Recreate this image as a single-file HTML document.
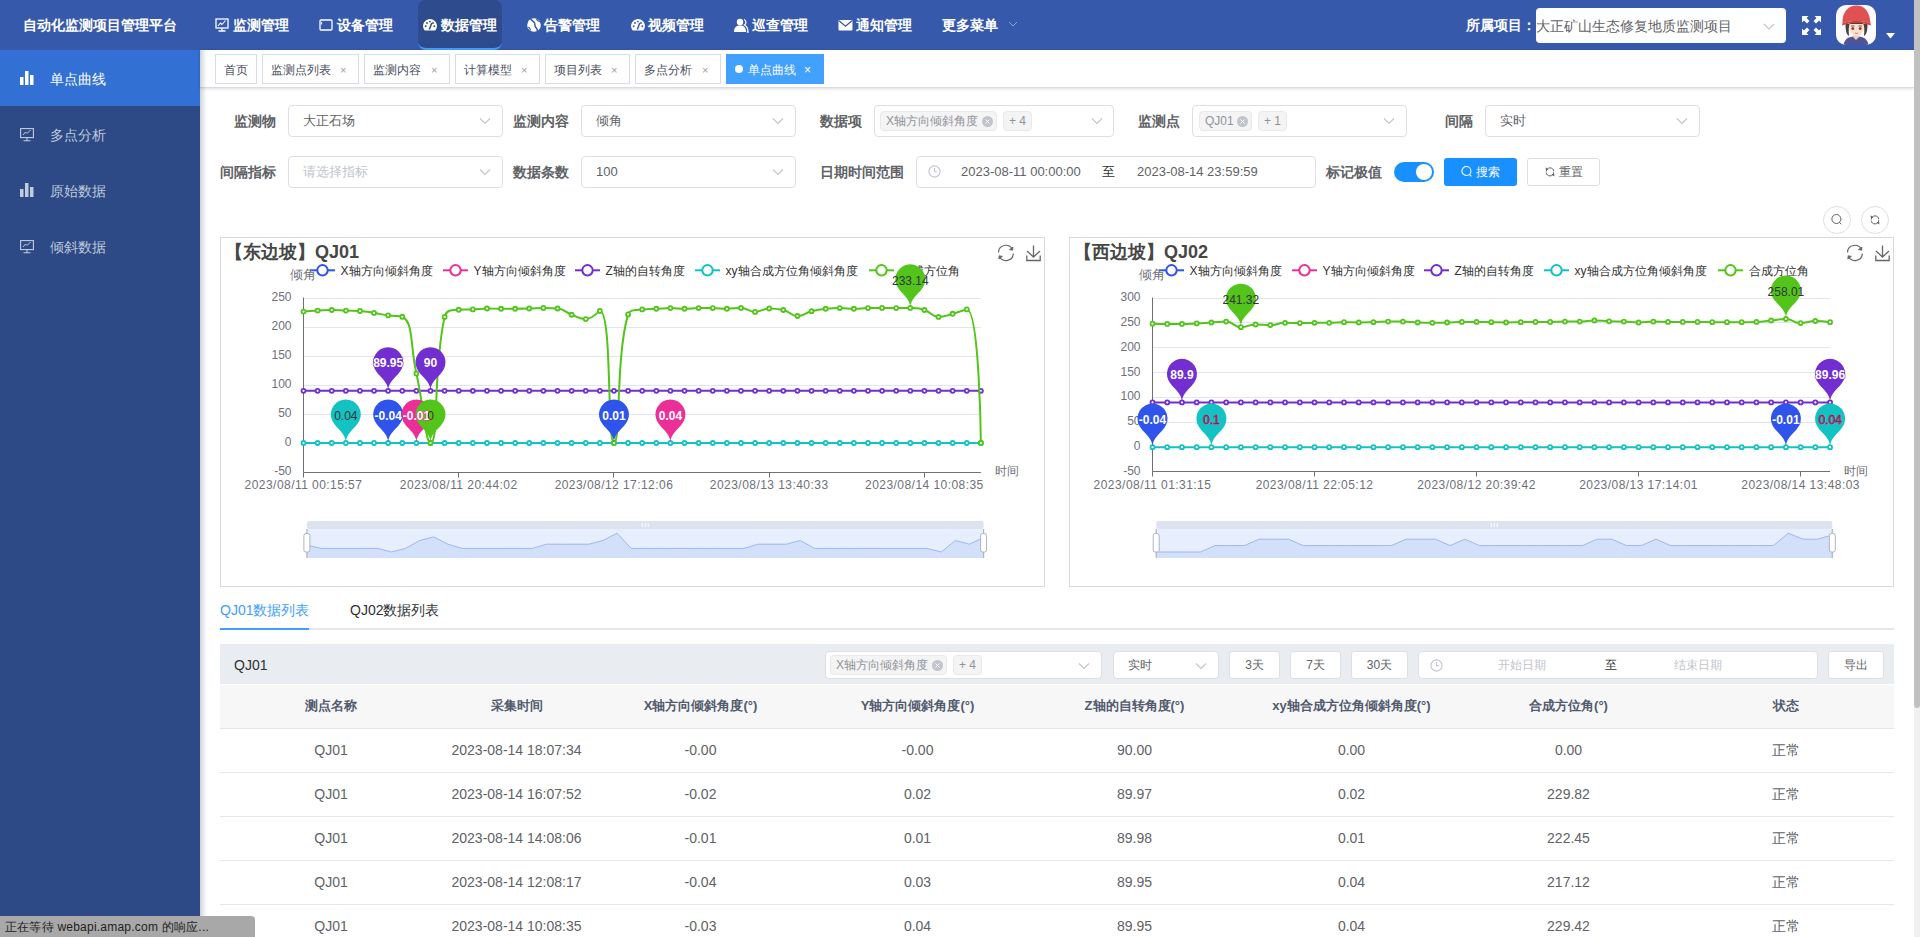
<!DOCTYPE html>
<html><head><meta charset="utf-8"><title>单点曲线</title>
<style>
*{box-sizing:border-box;margin:0;padding:0}
html,body{width:1920px;height:937px;overflow:hidden}
body{position:relative;font-family:"Liberation Sans",sans-serif;background:#fff;color:#606266}
.t{position:absolute;white-space:nowrap}
.r{position:absolute}
svg{position:absolute;overflow:visible}
</style></head><body>

<div class="r" style="left:0px;top:0px;width:1914px;height:50px;background:#3659ac"></div>
<div class="t" style="left:23px;top:15.0px;font-size:14px;line-height:20px;color:#fff;font-weight:bold;">自动化监测项目管理平台</div>
<div class="r" style="left:418px;top:0px;width:84px;height:50px;background:#2e4b8d;border-radius:8px;border-bottom:2px solid #409eff"></div>
<svg style="left:215px;top:18px" width="15" height="14" viewBox="0 0 15 14"><rect x="1" y="1" width="12" height="9" fill="none" stroke="#fff" stroke-width="1.3"/><path d="M3 8 L5.5 5 L7 6.5 L10.5 2.5" fill="none" stroke="#fff" stroke-width="1.1"/><path d="M7 10 V13 M3.5 13 H10.5" stroke="#fff" stroke-width="1.3"/></svg>
<div class="t" style="left:233px;top:15.0px;font-size:14px;line-height:20px;color:#fff;font-weight:bold;">监测管理</div>
<svg style="left:319px;top:18px" width="15" height="14" viewBox="0 0 15 14"><rect x="1" y="2" width="12" height="10" rx="1" fill="none" stroke="#fff" stroke-width="1.3"/><path d="M2.6 4 V6.5" stroke="#fff" stroke-width="1"/></svg>
<div class="t" style="left:337px;top:15.0px;font-size:14px;line-height:20px;color:#fff;font-weight:bold;">设备管理</div>
<svg style="left:423px;top:18px" width="15" height="14" viewBox="0 0 15 14"><path d="M1.64 12.5 A7 7 0 1 1 12.36 12.5 Z" fill="#fff"/><circle cx="2.7" cy="8.3" r="0.95" fill="#2e4b8d"/><circle cx="4" cy="5" r="0.95" fill="#2e4b8d"/><circle cx="7" cy="3.6" r="0.95" fill="#2e4b8d"/><circle cx="11.3" cy="8.3" r="0.95" fill="#2e4b8d"/><circle cx="10" cy="5" r="0.95" fill="#2e4b8d"/><path d="M6.3 11.5 L8.8 5" stroke="#2e4b8d" stroke-width="1.5"/></svg>
<div class="t" style="left:441px;top:15.0px;font-size:14px;line-height:20px;color:#fff;font-weight:bold;">数据管理</div>
<svg style="left:527px;top:18px" width="15" height="14" viewBox="0 0 15 14"><circle cx="7" cy="7" r="6.8" fill="#fff"/><path d="M3.8 0.9 C4.6 2.6 6.4 3.2 7.4 4.6 C8.4 6.2 7.2 8 8.8 9.4 C9.9 10.4 10.6 11.6 10.2 13.4" fill="none" stroke="#3659ac" stroke-width="1.5"/><path d="M9.4 0.9 C9.8 2.4 11.4 3.2 13.4 3.8" fill="none" stroke="#3659ac" stroke-width="1.2"/><path d="M1.2 9.2 C2.6 9.4 3.2 10.6 3.4 12.4" fill="none" stroke="#3659ac" stroke-width="1.1"/></svg>
<div class="t" style="left:544px;top:15.0px;font-size:14px;line-height:20px;color:#fff;font-weight:bold;">告警管理</div>
<svg style="left:631px;top:18px" width="15" height="14" viewBox="0 0 15 14"><path d="M1.64 12.5 A7 7 0 1 1 12.36 12.5 Z" fill="#fff"/><circle cx="2.7" cy="8.3" r="0.95" fill="#3659ac"/><circle cx="4" cy="5" r="0.95" fill="#3659ac"/><circle cx="7" cy="3.6" r="0.95" fill="#3659ac"/><circle cx="11.3" cy="8.3" r="0.95" fill="#3659ac"/><circle cx="10" cy="5" r="0.95" fill="#3659ac"/><path d="M6.3 11.5 L8.8 5" stroke="#3659ac" stroke-width="1.5"/></svg>
<div class="t" style="left:648px;top:15.0px;font-size:14px;line-height:20px;color:#fff;font-weight:bold;">视频管理</div>
<svg style="left:734px;top:18px" width="15" height="14" viewBox="0 0 15 14"><circle cx="6" cy="4" r="3.2" fill="#fff"/><path d="M0 14 C0 9 2.5 7.5 6 7.5 C9.5 7.5 12 9 12 14 Z" fill="#fff"/><path d="M10 1.5 C12.5 2.5 12.5 6 10.5 7 C12.5 8 14 10 14 14 L12.8 14" fill="none" stroke="#fff" stroke-width="1.3"/></svg>
<div class="t" style="left:752px;top:15.0px;font-size:14px;line-height:20px;color:#fff;font-weight:bold;">巡查管理</div>
<svg style="left:838px;top:18px" width="15" height="14" viewBox="0 0 15 14"><rect x="0.5" y="2" width="14" height="10.5" rx="1" fill="#fff"/><path d="M1 2.8 L7.5 8.2 L14 2.8" fill="none" stroke="#3659ac" stroke-width="1.3"/></svg>
<div class="t" style="left:856px;top:15.0px;font-size:14px;line-height:20px;color:#fff;font-weight:bold;">通知管理</div>
<div class="t" style="left:942px;top:15.0px;font-size:14px;line-height:20px;color:#fff;font-weight:bold;">更多菜单</div>
<svg style="left:1008px;top:21px" width="10" height="7" viewBox="0 0 10 7"><path d="M1 1 L5 5 L9 1" fill="none" stroke="#8fa6d6" stroke-width="1"/></svg>
<div class="t" style="left:1466px;top:15.0px;font-size:14px;line-height:20px;color:#fff;font-weight:bold;">所属项目：</div>
<div class="r" style="left:1536px;top:8px;width:250px;height:35px;background:#fff;border-radius:4px"></div>
<div class="t" style="left:1536px;top:15.5px;font-size:14px;line-height:20px;color:#606266;font-weight:normal;">大正矿山生态修复地质监测项目</div>
<svg style="left:1763px;top:23px" width="12" height="8" viewBox="0 0 12 8"><path d="M1 1 L6 6 L11 1" fill="none" stroke="#c0c4cc" stroke-width="1.2"/></svg>
<svg style="left:1802px;top:16px" width="19" height="19" viewBox="0 0 19 19"><g fill="#fff"><path d="M0 0 H6.5 L4.5 2 L7.5 5 L5 7.5 L2 4.5 L0 6.5 Z"/><path d="M19 0 V6.5 L17 4.5 L14 7.5 L11.5 5 L14.5 2 L12.5 0 Z"/><path d="M0 19 V12.5 L2 14.5 L5 11.5 L7.5 14 L4.5 17 L6.5 19 Z"/><path d="M19 19 H12.5 L14.5 17 L11.5 14 L14 11.5 L17 14.5 L19 12.5 Z"/></g></svg>
<svg style="left:1836px;top:5px" width="40" height="40" viewBox="0 0 40 40">
<defs><clipPath id="avc"><rect x="0" y="0" width="40" height="40" rx="10"/></clipPath></defs>
<g clip-path="url(#avc)">
<rect width="40" height="40" fill="#fdfbfd"/>
<path d="M7.5 40 C8.5 34 12 31.5 20 31.5 C28 31.5 31.5 34 32.5 40 Z" fill="#4f5496"/>
<path d="M17 27 H23 V32 L20 35 L17 32 Z" fill="#f2cdb6"/>
<path d="M12.5 17 C12.5 25 15 31 20.5 31 C26 31 28.5 25 28.5 17 Z" fill="#f7e0d0"/>
<path d="M9.5 19 C9.5 27 11 30 13 31 C12.5 26 12.5 21 14 18 L27 18 C28.5 21 28.5 26 28 31 C30 30 31.5 27 31.5 19 Z" fill="#4a3f3a"/>
<path d="M6.5 18.5 C6 8 11.5 0.5 20.5 0.5 C29.5 0.5 34 8 34.5 18.5 C30 16.5 25 16 20.5 16 C16 16 11 16.5 6.5 18.5 Z" fill="#e05252"/>
<path d="M6.5 18.5 C11 16.5 16 16 20.5 16 C25 16 30 16.5 34.5 18.5 L35 20.5 C30 18.5 25 18 20.5 18 C16 18 11 18.5 6 20.5 Z" fill="#c94040"/>
<ellipse cx="16.8" cy="23.5" rx="1.4" ry="1.6" fill="#9b3a2a"/><ellipse cx="24.2" cy="23.5" rx="1.4" ry="1.6" fill="#9b3a2a"/>
<path d="M15 21 H18.5 M22.5 21 H26" stroke="#4a3f3a" stroke-width="0.8"/>
<path d="M19 28 Q20.5 29 22 28" stroke="#e0705f" stroke-width="1" fill="none"/>
</g></svg>
<svg style="left:1886px;top:33px" width="9" height="6" viewBox="0 0 9 6"><path d="M0 0 H9 L4.5 5.5 Z" fill="#fff"/></svg>
<div class="r" style="left:0px;top:50px;width:200px;height:887px;background:#2d4986"></div>
<div class="r" style="left:0px;top:50px;width:200px;height:56px;background:#3270d3"></div>
<svg style="left:20px;top:71px" width="14" height="14" viewBox="0 0 14 14"><rect x="0" y="6" width="3.5" height="8" fill="#fff"/><rect x="5" y="0" width="3.5" height="14" fill="#fff"/><rect x="10" y="4" width="3.5" height="10" fill="#fff"/></svg>
<div class="t" style="left:50px;top:69.0px;font-size:14px;line-height:20px;color:#fff;font-weight:normal;">单点曲线</div>
<svg style="left:20px;top:128px" width="14" height="14" viewBox="0 0 14 14"><rect x="0.6" y="0.6" width="12.8" height="9" fill="none" stroke="#c3ccd9" stroke-width="1.1"/><path d="M3 7 L5.5 4 L7 5.5 L10.5 2" fill="none" stroke="#c3ccd9" stroke-width="1"/><path d="M7 9.6 V12.5 M3.5 12.8 H10.5" stroke="#c3ccd9" stroke-width="1.1"/></svg>
<div class="t" style="left:50px;top:125.0px;font-size:14px;line-height:20px;color:#bfcbd9;font-weight:normal;">多点分析</div>
<svg style="left:20px;top:183px" width="14" height="14" viewBox="0 0 14 14"><rect x="0" y="6" width="3.5" height="8" fill="#c3ccd9"/><rect x="5" y="0" width="3.5" height="14" fill="#c3ccd9"/><rect x="10" y="4" width="3.5" height="10" fill="#c3ccd9"/></svg>
<div class="t" style="left:50px;top:181.0px;font-size:14px;line-height:20px;color:#bfcbd9;font-weight:normal;">原始数据</div>
<svg style="left:20px;top:240px" width="14" height="14" viewBox="0 0 14 14"><rect x="0.6" y="0.6" width="12.8" height="9" fill="none" stroke="#c3ccd9" stroke-width="1.1"/><path d="M3 7 L5.5 4 L7 5.5 L10.5 2" fill="none" stroke="#c3ccd9" stroke-width="1"/><path d="M7 9.6 V12.5 M3.5 12.8 H10.5" stroke="#c3ccd9" stroke-width="1.1"/></svg>
<div class="t" style="left:50px;top:237.0px;font-size:14px;line-height:20px;color:#bfcbd9;font-weight:normal;">倾斜数据</div>
<div class="r" style="left:200px;top:50px;width:1714px;height:38px;background:#fff;border-bottom:1px solid #d8dce5;box-shadow:0 1px 3px 0 rgba(0,0,0,.12),0 0 3px 0 rgba(0,0,0,.04)"></div>
<div class="r" style="left:215px;top:54px;width:42px;height:30px;background:#fff;border:1px solid #d8dce5"></div>
<div class="t" style="left:224px;top:59.5px;font-size:12px;line-height:20px;color:#495060;font-weight:normal;">首页</div>
<div class="r" style="left:262px;top:54px;width:97px;height:30px;background:#fff;border:1px solid #d8dce5"></div>
<div class="t" style="left:271px;top:59.5px;font-size:12px;line-height:20px;color:#495060;font-weight:normal;">监测点列表</div>
<div class="t" style="left:340px;top:59.5px;font-size:11px;line-height:20px;color:#9a9ea6;font-weight:normal;">×</div>
<div class="r" style="left:364px;top:54px;width:86px;height:30px;background:#fff;border:1px solid #d8dce5"></div>
<div class="t" style="left:373px;top:59.5px;font-size:12px;line-height:20px;color:#495060;font-weight:normal;">监测内容</div>
<div class="t" style="left:431px;top:59.5px;font-size:11px;line-height:20px;color:#9a9ea6;font-weight:normal;">×</div>
<div class="r" style="left:455px;top:54px;width:85px;height:30px;background:#fff;border:1px solid #d8dce5"></div>
<div class="t" style="left:464px;top:59.5px;font-size:12px;line-height:20px;color:#495060;font-weight:normal;">计算模型</div>
<div class="t" style="left:521px;top:59.5px;font-size:11px;line-height:20px;color:#9a9ea6;font-weight:normal;">×</div>
<div class="r" style="left:545px;top:54px;width:85px;height:30px;background:#fff;border:1px solid #d8dce5"></div>
<div class="t" style="left:554px;top:59.5px;font-size:12px;line-height:20px;color:#495060;font-weight:normal;">项目列表</div>
<div class="t" style="left:611px;top:59.5px;font-size:11px;line-height:20px;color:#9a9ea6;font-weight:normal;">×</div>
<div class="r" style="left:635px;top:54px;width:86px;height:30px;background:#fff;border:1px solid #d8dce5"></div>
<div class="t" style="left:644px;top:59.5px;font-size:12px;line-height:20px;color:#495060;font-weight:normal;">多点分析</div>
<div class="t" style="left:702px;top:59.5px;font-size:11px;line-height:20px;color:#9a9ea6;font-weight:normal;">×</div>
<div class="r" style="left:726px;top:54px;width:98px;height:30px;background:#42a0ff;border:1px solid #42a0ff"></div>
<div class="r" style="left:735px;top:65px;width:8px;height:8px;border-radius:50%;background:#fff"></div>
<div class="t" style="left:748px;top:59.5px;font-size:12px;line-height:20px;color:#fff;font-weight:normal;">单点曲线</div>
<div class="t" style="left:804px;top:59.5px;font-size:12px;line-height:20px;color:#fff;font-weight:normal;">×</div>
<div class="r" style="left:200px;top:50px;width:8px;height:887px;background:linear-gradient(to right,rgba(0,21,41,0.20),rgba(0,21,41,0.12) 2px,rgba(0,21,41,0.075) 4px,rgba(0,21,41,0.03) 5.5px,rgba(0,21,41,0) 8px)"></div>
<div class="t" style="left:-324px;width:600px;text-align:right;top:110.5px;font-size:14px;line-height:20px;color:#606266;font-weight:bold;">监测物</div>
<div class="r" style="left:288px;top:105px;width:215px;height:32px;border:1px solid #dcdfe6;border-radius:4px;background:#fff"></div>
<div class="t" style="left:303px;top:111.0px;font-size:13px;line-height:20px;color:#606266;font-weight:normal;">大正石场</div>
<svg style="left:479px;top:116.5px" width="12" height="8" viewBox="0 0 12 8"><path d="M1 1.5 L6 6.5 L11 1.5" fill="none" stroke="#c0c4cc" stroke-width="1.1"/></svg>
<div class="t" style="left:-31px;width:600px;text-align:right;top:110.5px;font-size:14px;line-height:20px;color:#606266;font-weight:bold;">监测内容</div>
<div class="r" style="left:581px;top:105px;width:215px;height:32px;border:1px solid #dcdfe6;border-radius:4px;background:#fff"></div>
<div class="t" style="left:596px;top:111.0px;font-size:13px;line-height:20px;color:#606266;font-weight:normal;">倾角</div>
<svg style="left:772px;top:116.5px" width="12" height="8" viewBox="0 0 12 8"><path d="M1 1.5 L6 6.5 L11 1.5" fill="none" stroke="#c0c4cc" stroke-width="1.1"/></svg>
<div class="t" style="left:262px;width:600px;text-align:right;top:110.5px;font-size:14px;line-height:20px;color:#606266;font-weight:bold;">数据项</div>
<div class="r" style="left:874px;top:105px;width:240px;height:32px;border:1px solid #dcdfe6;border-radius:4px;background:#fff"></div>
<div class="r" style="left:880px;top:111px;width:117px;height:20px;background:#f4f4f5;border:1px solid #e9e9eb;border-radius:4px"></div><div class="t" style="left:886px;top:111.0px;font-size:12px;line-height:20px;color:#909399;font-weight:normal;">X轴方向倾斜角度</div><svg style="left:982.0px;top:115.5px" width="11" height="11" viewBox="0 0 11 11"><circle cx="5.5" cy="5.5" r="5.5" fill="#c0c4cc"/><path d="M3.5 3.5 L7.5 7.5 M7.5 3.5 L3.5 7.5" stroke="#fff" stroke-width="1"/></svg>
<div class="r" style="left:1003px;top:111px;width:29px;height:20px;background:#f4f4f5;border:1px solid #e9e9eb;border-radius:4px"></div><div class="t" style="left:1009px;top:111.0px;font-size:12px;line-height:20px;color:#909399;font-weight:normal;">+ 4</div>
<svg style="left:1091px;top:116.5px" width="12" height="8" viewBox="0 0 12 8"><path d="M1 1.5 L6 6.5 L11 1.5" fill="none" stroke="#c0c4cc" stroke-width="1.1"/></svg>
<div class="t" style="left:580px;width:600px;text-align:right;top:110.5px;font-size:14px;line-height:20px;color:#606266;font-weight:bold;">监测点</div>
<div class="r" style="left:1192px;top:105px;width:215px;height:32px;border:1px solid #dcdfe6;border-radius:4px;background:#fff"></div>
<div class="r" style="left:1199px;top:111px;width:53px;height:20px;background:#f4f4f5;border:1px solid #e9e9eb;border-radius:4px"></div><div class="t" style="left:1205px;top:111.0px;font-size:12px;line-height:20px;color:#909399;font-weight:normal;">QJ01</div><svg style="left:1237.0px;top:115.5px" width="11" height="11" viewBox="0 0 11 11"><circle cx="5.5" cy="5.5" r="5.5" fill="#c0c4cc"/><path d="M3.5 3.5 L7.5 7.5 M7.5 3.5 L3.5 7.5" stroke="#fff" stroke-width="1"/></svg>
<div class="r" style="left:1258px;top:111px;width:29px;height:20px;background:#f4f4f5;border:1px solid #e9e9eb;border-radius:4px"></div><div class="t" style="left:1264px;top:111.0px;font-size:12px;line-height:20px;color:#909399;font-weight:normal;">+ 1</div>
<svg style="left:1383px;top:116.5px" width="12" height="8" viewBox="0 0 12 8"><path d="M1 1.5 L6 6.5 L11 1.5" fill="none" stroke="#c0c4cc" stroke-width="1.1"/></svg>
<div class="t" style="left:873px;width:600px;text-align:right;top:110.5px;font-size:14px;line-height:20px;color:#606266;font-weight:bold;">间隔</div>
<div class="r" style="left:1485px;top:105px;width:215px;height:32px;border:1px solid #dcdfe6;border-radius:4px;background:#fff"></div>
<div class="t" style="left:1500px;top:111.0px;font-size:13px;line-height:20px;color:#606266;font-weight:normal;">实时</div>
<svg style="left:1676px;top:116.5px" width="12" height="8" viewBox="0 0 12 8"><path d="M1 1.5 L6 6.5 L11 1.5" fill="none" stroke="#c0c4cc" stroke-width="1.1"/></svg>
<div class="t" style="left:-324px;width:600px;text-align:right;top:161.5px;font-size:14px;line-height:20px;color:#606266;font-weight:bold;">间隔指标</div>
<div class="r" style="left:288px;top:156px;width:215px;height:32px;border:1px solid #dcdfe6;border-radius:4px;background:#fff"></div>
<div class="t" style="left:303px;top:162.0px;font-size:13px;line-height:20px;color:#c0c4cc;font-weight:normal;">请选择指标</div>
<svg style="left:479px;top:167.5px" width="12" height="8" viewBox="0 0 12 8"><path d="M1 1.5 L6 6.5 L11 1.5" fill="none" stroke="#c0c4cc" stroke-width="1.1"/></svg>
<div class="t" style="left:-31px;width:600px;text-align:right;top:161.5px;font-size:14px;line-height:20px;color:#606266;font-weight:bold;">数据条数</div>
<div class="r" style="left:581px;top:156px;width:215px;height:32px;border:1px solid #dcdfe6;border-radius:4px;background:#fff"></div>
<div class="t" style="left:596px;top:162.0px;font-size:13px;line-height:20px;color:#606266;font-weight:normal;">100</div>
<svg style="left:772px;top:167.5px" width="12" height="8" viewBox="0 0 12 8"><path d="M1 1.5 L6 6.5 L11 1.5" fill="none" stroke="#c0c4cc" stroke-width="1.1"/></svg>
<div class="t" style="left:304px;width:600px;text-align:right;top:161.5px;font-size:14px;line-height:20px;color:#606266;font-weight:bold;">日期时间范围</div>
<div class="r" style="left:916px;top:156px;width:400px;height:32px;border:1px solid #dcdfe6;border-radius:4px;background:#fff"></div>
<svg style="left:928px;top:165.0px" width="13" height="13" viewBox="0 0 13 13"><circle cx="6.5" cy="6.5" r="5.6" fill="none" stroke="#c0c4cc" stroke-width="1.1"/><path d="M6.5 3 V6.8 H9.2" fill="none" stroke="#c0c4cc" stroke-width="1.1"/></svg>
<div class="t" style="left:961px;top:162.0px;font-size:13px;line-height:20px;color:#606266;font-weight:normal;">2023-08-11 00:00:00</div>
<div class="t" style="left:1102px;top:161.5px;font-size:13px;line-height:20px;color:#303133;font-weight:normal;">至</div>
<div class="t" style="left:1137px;top:162.0px;font-size:13px;line-height:20px;color:#606266;font-weight:normal;">2023-08-14 23:59:59</div>
<div class="t" style="left:782px;width:600px;text-align:right;top:161.5px;font-size:14px;line-height:20px;color:#606266;font-weight:bold;">标记极值</div>
<div class="r" style="left:1394px;top:162px;width:40px;height:20px;background:#1890ff;border-radius:10px"></div>
<div class="r" style="left:1416px;top:164px;width:16px;height:16px;background:#fff;border-radius:50%"></div>
<div class="r" style="left:1444px;top:158px;width:73px;height:28px;background:#1890ff;border-radius:3px"></div>
<svg style="left:1461px;top:166px" width="12" height="12" viewBox="0 0 12 12"><circle cx="5.4" cy="5" r="4.5" fill="none" stroke="#fff" stroke-width="1.1"/><path d="M8.4 8.4 L10.3 10.3" stroke="#fff" stroke-width="1.1"/></svg>
<div class="t" style="left:1476px;top:162.0px;font-size:12px;line-height:20px;color:#fff;font-weight:normal;">搜索</div>
<div class="r" style="left:1527px;top:158px;width:73px;height:28px;background:#fff;border:1px solid #dcdfe6;border-radius:3px"></div>
<svg style="left:1545px;top:167px" width="10" height="10" viewBox="0 0 10 10"><path d="M1.3 4.6 C1.3 2.3 2.8 0.9 5 0.9 C7.2 0.9 8.7 2.3 8.7 4.3 M8.7 5.2 C8.7 7.4 7.2 8.9 5 8.9 C2.8 8.9 1.3 7.5 1.1 5.6" fill="none" stroke="#606266" stroke-width="1"/><path d="M0.6 0.3 L3.6 2.4 L0.9 3.2 Z M9.4 9.5 L6.4 7.4 L9.1 6.6 Z" fill="#606266"/></svg>
<div class="t" style="left:1559px;top:162.0px;font-size:12px;line-height:20px;color:#606266;font-weight:normal;">重置</div>
<div class="r" style="left:1823px;top:206px;width:28px;height:28px;border:1px solid #dcdfe6;border-radius:50%;background:#fff"></div>
<svg style="left:1831px;top:214px" width="12" height="12" viewBox="0 0 12 12"><circle cx="5.4" cy="5" r="4.5" fill="none" stroke="#606266" stroke-width="1"/><path d="M8.4 8.4 L10.3 10.3" stroke="#606266" stroke-width="1"/></svg>
<div class="r" style="left:1861px;top:206px;width:28px;height:28px;border:1px solid #dcdfe6;border-radius:50%;background:#fff"></div>
<svg style="left:1870px;top:215px" width="10" height="10" viewBox="0 0 10 10"><path d="M1.3 4.6 C1.3 2.3 2.8 0.9 5 0.9 C7.2 0.9 8.7 2.3 8.7 4.3 M8.7 5.2 C8.7 7.4 7.2 8.9 5 8.9 C2.8 8.9 1.3 7.5 1.1 5.6" fill="none" stroke="#606266" stroke-width="1"/><path d="M0.6 0.3 L3.6 2.4 L0.9 3.2 Z M9.4 9.5 L6.4 7.4 L9.1 6.6 Z" fill="#606266"/></svg>
<div class="r" style="left:220px;top:237px;width:825px;height:350px;border:1px solid #d9d9d9"></div>
<div class="t" style="left:225px;top:239.5px;font-size:18px;line-height:24px;color:#464646;font-weight:bold;">【东边坡】QJ01</div>
<svg style="left:997px;top:244px" width="18" height="18" viewBox="0 0 18 18"><path d="M1.5 8.5 A7.3 7.3 0 0 1 15.3 5.3 M16.3 9.5 A7.3 7.3 0 0 1 2.5 12.6" fill="none" stroke="#666" stroke-width="1.2"/><path d="M16 3 L15.6 6.3 L12.4 5.6 Z M1.8 15 L2.2 11.7 L5.4 12.4 Z" fill="#666" stroke="#666" stroke-width="0.8"/></svg>
<svg style="left:1026px;top:245px" width="15" height="17" viewBox="0 0 15 17"><path d="M7.5 0.5 V11.5 M1 6 L7.5 12 L14 6 M0.8 10.5 V15.5 H14.2 V10.5" fill="none" stroke="#666" stroke-width="1.3"/></svg>
<svg style="left:310px;top:263px" width="25" height="14" viewBox="0 0 25 14"><path d="M0 7.3 H25" stroke="#2f54eb" stroke-width="2"/><circle cx="12.5" cy="7.3" r="5.2" fill="#fff" stroke="#2f54eb" stroke-width="2"/></svg>
<div class="t" style="left:340.5px;top:260.5px;font-size:12px;line-height:20px;color:#333;font-weight:normal;">X轴方向倾斜角度</div>
<svg style="left:443px;top:263px" width="25" height="14" viewBox="0 0 25 14"><path d="M0 7.3 H25" stroke="#eb2f96" stroke-width="2"/><circle cx="12.5" cy="7.3" r="5.2" fill="#fff" stroke="#eb2f96" stroke-width="2"/></svg>
<div class="t" style="left:473.5px;top:260.5px;font-size:12px;line-height:20px;color:#333;font-weight:normal;">Y轴方向倾斜角度</div>
<svg style="left:575px;top:263px" width="25" height="14" viewBox="0 0 25 14"><path d="M0 7.3 H25" stroke="#722ed1" stroke-width="2"/><circle cx="12.5" cy="7.3" r="5.2" fill="#fff" stroke="#722ed1" stroke-width="2"/></svg>
<div class="t" style="left:605.5px;top:260.5px;font-size:12px;line-height:20px;color:#333;font-weight:normal;">Z轴的自转角度</div>
<svg style="left:695px;top:263px" width="25" height="14" viewBox="0 0 25 14"><path d="M0 7.3 H25" stroke="#13c2c2" stroke-width="2"/><circle cx="12.5" cy="7.3" r="5.2" fill="#fff" stroke="#13c2c2" stroke-width="2"/></svg>
<div class="t" style="left:725.5px;top:260.5px;font-size:12px;line-height:20px;color:#333;font-weight:normal;">xy轴合成方位角倾斜角度</div>
<svg style="left:869px;top:263px" width="25" height="14" viewBox="0 0 25 14"><path d="M0 7.3 H25" stroke="#52c41a" stroke-width="2"/><circle cx="12.5" cy="7.3" r="5.2" fill="#fff" stroke="#52c41a" stroke-width="2"/></svg>
<div class="t" style="left:899.5px;top:260.5px;font-size:12px;line-height:20px;color:#333;font-weight:normal;">合成方位角</div>
<div class="t" style="left:-284px;width:600px;text-align:right;top:264.5px;font-size:13px;line-height:20px;color:#6e7079;font-weight:normal;">倾角</div>
<svg style="left:0;top:0" width="1920" height="937">
<path d="M303.5 298.50 H980.88" stroke="#e0e6f1" stroke-width="1"/>
<path d="M303.5 327.50 H980.88" stroke="#e0e6f1" stroke-width="1"/>
<path d="M303.5 356.50 H980.88" stroke="#e0e6f1" stroke-width="1"/>
<path d="M303.5 385.50 H980.88" stroke="#e0e6f1" stroke-width="1"/>
<path d="M303.5 414.50 H980.88" stroke="#e0e6f1" stroke-width="1"/>
<path d="M303.5 443.50 H980.88" stroke="#e0e6f1" stroke-width="1"/>
<path d="M303.50 297.50 V472.50" stroke="#6e7079" stroke-width="1"/>
<path d="M303.50 472.50 H980.88" stroke="#6e7079" stroke-width="1"/>
<path d="M303.50 472.50 V477.50" stroke="#6e7079" stroke-width="1"/>
<path d="M458.50 472.50 V477.50" stroke="#6e7079" stroke-width="1"/>
<path d="M613.50 472.50 V477.50" stroke="#6e7079" stroke-width="1"/>
<path d="M769.50 472.50 V477.50" stroke="#6e7079" stroke-width="1"/>
<path d="M924.50 472.50 V477.50" stroke="#6e7079" stroke-width="1"/>
</svg>
<div class="t" style="left:-308.5px;width:600px;text-align:right;top:287.0px;font-size:12px;line-height:20px;color:#6e7079;font-weight:normal;">250</div>
<div class="t" style="left:-308.5px;width:600px;text-align:right;top:316.0px;font-size:12px;line-height:20px;color:#6e7079;font-weight:normal;">200</div>
<div class="t" style="left:-308.5px;width:600px;text-align:right;top:345.0px;font-size:12px;line-height:20px;color:#6e7079;font-weight:normal;">150</div>
<div class="t" style="left:-308.5px;width:600px;text-align:right;top:374.0px;font-size:12px;line-height:20px;color:#6e7079;font-weight:normal;">100</div>
<div class="t" style="left:-308.5px;width:600px;text-align:right;top:403.0px;font-size:12px;line-height:20px;color:#6e7079;font-weight:normal;">50</div>
<div class="t" style="left:-308.5px;width:600px;text-align:right;top:432.0px;font-size:12px;line-height:20px;color:#6e7079;font-weight:normal;">0</div>
<div class="t" style="left:-308.5px;width:600px;text-align:right;top:461.0px;font-size:12px;line-height:20px;color:#6e7079;font-weight:normal;">-50</div>
<div class="t" style="left:3.5px;width:600px;text-align:center;top:474.5px;font-size:12px;line-height:20px;color:#6e7079;font-weight:normal;letter-spacing:0.45px">2023/08/11 00:15:57</div>
<div class="t" style="left:158.73199999999997px;width:600px;text-align:center;top:474.5px;font-size:12px;line-height:20px;color:#6e7079;font-weight:normal;letter-spacing:0.45px">2023/08/11 20:44:02</div>
<div class="t" style="left:313.96399999999994px;width:600px;text-align:center;top:474.5px;font-size:12px;line-height:20px;color:#6e7079;font-weight:normal;letter-spacing:0.45px">2023/08/12 17:12:06</div>
<div class="t" style="left:469.196px;width:600px;text-align:center;top:474.5px;font-size:12px;line-height:20px;color:#6e7079;font-weight:normal;letter-spacing:0.45px">2023/08/13 13:40:33</div>
<div class="t" style="left:624.428px;width:600px;text-align:center;top:474.5px;font-size:12px;line-height:20px;color:#6e7079;font-weight:normal;letter-spacing:0.45px">2023/08/14 10:08:35</div>
<div class="t" style="left:994.876px;top:460.5px;font-size:12px;line-height:20px;color:#6e7079;font-weight:normal;">时间</div>
<svg style="left:0;top:0" width="1920" height="937">
<path d="M303.50 390.80 C303.50 390.80 310.56 390.80 317.61 390.80 C324.67 390.80 324.67 390.80 331.72 390.80 C338.78 390.80 338.78 390.80 345.84 390.80 C352.89 390.80 352.89 390.80 359.95 390.80 C367.00 390.80 367.00 390.80 374.06 390.80 C381.12 390.80 381.12 390.80 388.17 390.80 C395.23 390.80 395.23 390.80 402.28 390.80 C409.34 390.80 409.34 390.80 416.40 390.80 C423.45 390.80 423.45 390.80 430.51 390.80 C437.56 390.80 437.56 390.80 444.62 390.80 C451.68 390.80 451.68 390.80 458.73 390.80 C465.79 390.80 465.79 390.80 472.84 390.80 C479.90 390.80 479.90 390.80 486.96 390.80 C494.01 390.80 494.01 390.80 501.07 390.80 C508.12 390.80 508.12 390.80 515.18 390.80 C522.24 390.80 522.24 390.80 529.29 390.80 C536.35 390.80 536.35 390.80 543.40 390.80 C550.46 390.80 550.46 390.80 557.52 390.80 C564.57 390.80 564.57 390.80 571.63 390.80 C578.68 390.80 578.68 390.80 585.74 390.80 C592.80 390.80 592.80 390.80 599.85 390.80 C606.91 390.80 606.91 390.80 613.96 390.80 C621.02 390.80 621.02 390.80 628.08 390.80 C635.13 390.80 635.13 390.80 642.19 390.80 C649.24 390.80 649.24 390.80 656.30 390.80 C663.36 390.80 663.36 390.80 670.41 390.80 C677.47 390.80 677.47 390.80 684.52 390.80 C691.58 390.80 691.58 390.80 698.64 390.80 C705.69 390.80 705.69 390.80 712.75 390.80 C719.80 390.80 719.80 390.80 726.86 390.80 C733.92 390.80 733.92 390.80 740.97 390.80 C748.03 390.80 748.03 390.80 755.08 390.80 C762.14 390.80 762.14 390.80 769.20 390.80 C776.25 390.80 776.25 390.80 783.31 390.80 C790.36 390.80 790.36 390.80 797.42 390.80 C804.48 390.80 804.48 390.80 811.53 390.80 C818.59 390.80 818.59 390.80 825.64 390.80 C832.70 390.80 832.70 390.80 839.76 390.80 C846.81 390.80 846.81 390.80 853.87 390.80 C860.92 390.80 860.92 390.80 867.98 390.80 C875.04 390.80 875.04 390.80 882.09 390.80 C889.15 390.80 889.15 390.80 896.20 390.80 C903.26 390.80 903.26 390.80 910.32 390.80 C917.37 390.80 917.37 390.80 924.43 390.80 C931.48 390.80 931.48 390.80 938.54 390.80 C945.60 390.80 945.60 390.80 952.65 390.80 C959.71 390.80 959.71 390.80 966.76 390.80 C973.82 390.80 980.88 390.80 980.88 390.80" fill="none" stroke="#722ed1" stroke-width="2" stroke-linejoin="round"/><circle cx="303.50" cy="390.80" r="2" fill="#fff" stroke="#722ed1" stroke-width="1.8"/><circle cx="317.61" cy="390.80" r="2" fill="#fff" stroke="#722ed1" stroke-width="1.8"/><circle cx="331.72" cy="390.80" r="2" fill="#fff" stroke="#722ed1" stroke-width="1.8"/><circle cx="345.84" cy="390.80" r="2" fill="#fff" stroke="#722ed1" stroke-width="1.8"/><circle cx="359.95" cy="390.80" r="2" fill="#fff" stroke="#722ed1" stroke-width="1.8"/><circle cx="374.06" cy="390.80" r="2" fill="#fff" stroke="#722ed1" stroke-width="1.8"/><circle cx="388.17" cy="390.80" r="2" fill="#fff" stroke="#722ed1" stroke-width="1.8"/><circle cx="402.28" cy="390.80" r="2" fill="#fff" stroke="#722ed1" stroke-width="1.8"/><circle cx="416.40" cy="390.80" r="2" fill="#fff" stroke="#722ed1" stroke-width="1.8"/><circle cx="430.51" cy="390.80" r="2" fill="#fff" stroke="#722ed1" stroke-width="1.8"/><circle cx="444.62" cy="390.80" r="2" fill="#fff" stroke="#722ed1" stroke-width="1.8"/><circle cx="458.73" cy="390.80" r="2" fill="#fff" stroke="#722ed1" stroke-width="1.8"/><circle cx="472.84" cy="390.80" r="2" fill="#fff" stroke="#722ed1" stroke-width="1.8"/><circle cx="486.96" cy="390.80" r="2" fill="#fff" stroke="#722ed1" stroke-width="1.8"/><circle cx="501.07" cy="390.80" r="2" fill="#fff" stroke="#722ed1" stroke-width="1.8"/><circle cx="515.18" cy="390.80" r="2" fill="#fff" stroke="#722ed1" stroke-width="1.8"/><circle cx="529.29" cy="390.80" r="2" fill="#fff" stroke="#722ed1" stroke-width="1.8"/><circle cx="543.40" cy="390.80" r="2" fill="#fff" stroke="#722ed1" stroke-width="1.8"/><circle cx="557.52" cy="390.80" r="2" fill="#fff" stroke="#722ed1" stroke-width="1.8"/><circle cx="571.63" cy="390.80" r="2" fill="#fff" stroke="#722ed1" stroke-width="1.8"/><circle cx="585.74" cy="390.80" r="2" fill="#fff" stroke="#722ed1" stroke-width="1.8"/><circle cx="599.85" cy="390.80" r="2" fill="#fff" stroke="#722ed1" stroke-width="1.8"/><circle cx="613.96" cy="390.80" r="2" fill="#fff" stroke="#722ed1" stroke-width="1.8"/><circle cx="628.08" cy="390.80" r="2" fill="#fff" stroke="#722ed1" stroke-width="1.8"/><circle cx="642.19" cy="390.80" r="2" fill="#fff" stroke="#722ed1" stroke-width="1.8"/><circle cx="656.30" cy="390.80" r="2" fill="#fff" stroke="#722ed1" stroke-width="1.8"/><circle cx="670.41" cy="390.80" r="2" fill="#fff" stroke="#722ed1" stroke-width="1.8"/><circle cx="684.52" cy="390.80" r="2" fill="#fff" stroke="#722ed1" stroke-width="1.8"/><circle cx="698.64" cy="390.80" r="2" fill="#fff" stroke="#722ed1" stroke-width="1.8"/><circle cx="712.75" cy="390.80" r="2" fill="#fff" stroke="#722ed1" stroke-width="1.8"/><circle cx="726.86" cy="390.80" r="2" fill="#fff" stroke="#722ed1" stroke-width="1.8"/><circle cx="740.97" cy="390.80" r="2" fill="#fff" stroke="#722ed1" stroke-width="1.8"/><circle cx="755.08" cy="390.80" r="2" fill="#fff" stroke="#722ed1" stroke-width="1.8"/><circle cx="769.20" cy="390.80" r="2" fill="#fff" stroke="#722ed1" stroke-width="1.8"/><circle cx="783.31" cy="390.80" r="2" fill="#fff" stroke="#722ed1" stroke-width="1.8"/><circle cx="797.42" cy="390.80" r="2" fill="#fff" stroke="#722ed1" stroke-width="1.8"/><circle cx="811.53" cy="390.80" r="2" fill="#fff" stroke="#722ed1" stroke-width="1.8"/><circle cx="825.64" cy="390.80" r="2" fill="#fff" stroke="#722ed1" stroke-width="1.8"/><circle cx="839.76" cy="390.80" r="2" fill="#fff" stroke="#722ed1" stroke-width="1.8"/><circle cx="853.87" cy="390.80" r="2" fill="#fff" stroke="#722ed1" stroke-width="1.8"/><circle cx="867.98" cy="390.80" r="2" fill="#fff" stroke="#722ed1" stroke-width="1.8"/><circle cx="882.09" cy="390.80" r="2" fill="#fff" stroke="#722ed1" stroke-width="1.8"/><circle cx="896.20" cy="390.80" r="2" fill="#fff" stroke="#722ed1" stroke-width="1.8"/><circle cx="910.32" cy="390.80" r="2" fill="#fff" stroke="#722ed1" stroke-width="1.8"/><circle cx="924.43" cy="390.80" r="2" fill="#fff" stroke="#722ed1" stroke-width="1.8"/><circle cx="938.54" cy="390.80" r="2" fill="#fff" stroke="#722ed1" stroke-width="1.8"/><circle cx="952.65" cy="390.80" r="2" fill="#fff" stroke="#722ed1" stroke-width="1.8"/><circle cx="966.76" cy="390.80" r="2" fill="#fff" stroke="#722ed1" stroke-width="1.8"/><circle cx="980.88" cy="390.80" r="2" fill="#fff" stroke="#722ed1" stroke-width="1.8"/>
<path d="M303.50 443.00 C303.50 443.00 310.56 443.00 317.61 443.00 C324.67 443.00 324.67 443.00 331.72 443.00 C338.78 443.00 338.78 443.00 345.84 443.00 C352.89 443.00 352.89 443.00 359.95 443.00 C367.00 443.00 367.00 443.00 374.06 443.00 C381.12 443.00 381.12 443.00 388.17 443.00 C395.23 443.00 395.23 443.00 402.28 443.00 C409.34 443.00 409.34 443.00 416.40 443.00 C423.45 443.00 423.45 443.00 430.51 443.00 C437.56 443.00 437.56 443.00 444.62 443.00 C451.68 443.00 451.68 443.00 458.73 443.00 C465.79 443.00 465.79 443.00 472.84 443.00 C479.90 443.00 479.90 443.00 486.96 443.00 C494.01 443.00 494.01 443.00 501.07 443.00 C508.12 443.00 508.12 443.00 515.18 443.00 C522.24 443.00 522.24 443.00 529.29 443.00 C536.35 443.00 536.35 443.00 543.40 443.00 C550.46 443.00 550.46 443.00 557.52 443.00 C564.57 443.00 564.57 443.00 571.63 443.00 C578.68 443.00 578.68 443.00 585.74 443.00 C592.80 443.00 592.80 443.00 599.85 443.00 C606.91 443.00 606.91 443.00 613.96 443.00 C621.02 443.00 621.02 443.00 628.08 443.00 C635.13 443.00 635.13 443.00 642.19 443.00 C649.24 443.00 649.24 443.00 656.30 443.00 C663.36 443.00 663.36 443.00 670.41 443.00 C677.47 443.00 677.47 443.00 684.52 443.00 C691.58 443.00 691.58 443.00 698.64 443.00 C705.69 443.00 705.69 443.00 712.75 443.00 C719.80 443.00 719.80 443.00 726.86 443.00 C733.92 443.00 733.92 443.00 740.97 443.00 C748.03 443.00 748.03 443.00 755.08 443.00 C762.14 443.00 762.14 443.00 769.20 443.00 C776.25 443.00 776.25 443.00 783.31 443.00 C790.36 443.00 790.36 443.00 797.42 443.00 C804.48 443.00 804.48 443.00 811.53 443.00 C818.59 443.00 818.59 443.00 825.64 443.00 C832.70 443.00 832.70 443.00 839.76 443.00 C846.81 443.00 846.81 443.00 853.87 443.00 C860.92 443.00 860.92 443.00 867.98 443.00 C875.04 443.00 875.04 443.00 882.09 443.00 C889.15 443.00 889.15 443.00 896.20 443.00 C903.26 443.00 903.26 443.00 910.32 443.00 C917.37 443.00 917.37 443.00 924.43 443.00 C931.48 443.00 931.48 443.00 938.54 443.00 C945.60 443.00 945.60 443.00 952.65 443.00 C959.71 443.00 959.71 443.00 966.76 443.00 C973.82 443.00 980.88 443.00 980.88 443.00" fill="none" stroke="#13c2c2" stroke-width="2" stroke-linejoin="round"/><circle cx="303.50" cy="443.00" r="2" fill="#fff" stroke="#13c2c2" stroke-width="1.8"/><circle cx="317.61" cy="443.00" r="2" fill="#fff" stroke="#13c2c2" stroke-width="1.8"/><circle cx="331.72" cy="443.00" r="2" fill="#fff" stroke="#13c2c2" stroke-width="1.8"/><circle cx="345.84" cy="443.00" r="2" fill="#fff" stroke="#13c2c2" stroke-width="1.8"/><circle cx="359.95" cy="443.00" r="2" fill="#fff" stroke="#13c2c2" stroke-width="1.8"/><circle cx="374.06" cy="443.00" r="2" fill="#fff" stroke="#13c2c2" stroke-width="1.8"/><circle cx="388.17" cy="443.00" r="2" fill="#fff" stroke="#13c2c2" stroke-width="1.8"/><circle cx="402.28" cy="443.00" r="2" fill="#fff" stroke="#13c2c2" stroke-width="1.8"/><circle cx="416.40" cy="443.00" r="2" fill="#fff" stroke="#13c2c2" stroke-width="1.8"/><circle cx="430.51" cy="443.00" r="2" fill="#fff" stroke="#13c2c2" stroke-width="1.8"/><circle cx="444.62" cy="443.00" r="2" fill="#fff" stroke="#13c2c2" stroke-width="1.8"/><circle cx="458.73" cy="443.00" r="2" fill="#fff" stroke="#13c2c2" stroke-width="1.8"/><circle cx="472.84" cy="443.00" r="2" fill="#fff" stroke="#13c2c2" stroke-width="1.8"/><circle cx="486.96" cy="443.00" r="2" fill="#fff" stroke="#13c2c2" stroke-width="1.8"/><circle cx="501.07" cy="443.00" r="2" fill="#fff" stroke="#13c2c2" stroke-width="1.8"/><circle cx="515.18" cy="443.00" r="2" fill="#fff" stroke="#13c2c2" stroke-width="1.8"/><circle cx="529.29" cy="443.00" r="2" fill="#fff" stroke="#13c2c2" stroke-width="1.8"/><circle cx="543.40" cy="443.00" r="2" fill="#fff" stroke="#13c2c2" stroke-width="1.8"/><circle cx="557.52" cy="443.00" r="2" fill="#fff" stroke="#13c2c2" stroke-width="1.8"/><circle cx="571.63" cy="443.00" r="2" fill="#fff" stroke="#13c2c2" stroke-width="1.8"/><circle cx="585.74" cy="443.00" r="2" fill="#fff" stroke="#13c2c2" stroke-width="1.8"/><circle cx="599.85" cy="443.00" r="2" fill="#fff" stroke="#13c2c2" stroke-width="1.8"/><circle cx="613.96" cy="443.00" r="2" fill="#fff" stroke="#13c2c2" stroke-width="1.8"/><circle cx="628.08" cy="443.00" r="2" fill="#fff" stroke="#13c2c2" stroke-width="1.8"/><circle cx="642.19" cy="443.00" r="2" fill="#fff" stroke="#13c2c2" stroke-width="1.8"/><circle cx="656.30" cy="443.00" r="2" fill="#fff" stroke="#13c2c2" stroke-width="1.8"/><circle cx="670.41" cy="443.00" r="2" fill="#fff" stroke="#13c2c2" stroke-width="1.8"/><circle cx="684.52" cy="443.00" r="2" fill="#fff" stroke="#13c2c2" stroke-width="1.8"/><circle cx="698.64" cy="443.00" r="2" fill="#fff" stroke="#13c2c2" stroke-width="1.8"/><circle cx="712.75" cy="443.00" r="2" fill="#fff" stroke="#13c2c2" stroke-width="1.8"/><circle cx="726.86" cy="443.00" r="2" fill="#fff" stroke="#13c2c2" stroke-width="1.8"/><circle cx="740.97" cy="443.00" r="2" fill="#fff" stroke="#13c2c2" stroke-width="1.8"/><circle cx="755.08" cy="443.00" r="2" fill="#fff" stroke="#13c2c2" stroke-width="1.8"/><circle cx="769.20" cy="443.00" r="2" fill="#fff" stroke="#13c2c2" stroke-width="1.8"/><circle cx="783.31" cy="443.00" r="2" fill="#fff" stroke="#13c2c2" stroke-width="1.8"/><circle cx="797.42" cy="443.00" r="2" fill="#fff" stroke="#13c2c2" stroke-width="1.8"/><circle cx="811.53" cy="443.00" r="2" fill="#fff" stroke="#13c2c2" stroke-width="1.8"/><circle cx="825.64" cy="443.00" r="2" fill="#fff" stroke="#13c2c2" stroke-width="1.8"/><circle cx="839.76" cy="443.00" r="2" fill="#fff" stroke="#13c2c2" stroke-width="1.8"/><circle cx="853.87" cy="443.00" r="2" fill="#fff" stroke="#13c2c2" stroke-width="1.8"/><circle cx="867.98" cy="443.00" r="2" fill="#fff" stroke="#13c2c2" stroke-width="1.8"/><circle cx="882.09" cy="443.00" r="2" fill="#fff" stroke="#13c2c2" stroke-width="1.8"/><circle cx="896.20" cy="443.00" r="2" fill="#fff" stroke="#13c2c2" stroke-width="1.8"/><circle cx="910.32" cy="443.00" r="2" fill="#fff" stroke="#13c2c2" stroke-width="1.8"/><circle cx="924.43" cy="443.00" r="2" fill="#fff" stroke="#13c2c2" stroke-width="1.8"/><circle cx="938.54" cy="443.00" r="2" fill="#fff" stroke="#13c2c2" stroke-width="1.8"/><circle cx="952.65" cy="443.00" r="2" fill="#fff" stroke="#13c2c2" stroke-width="1.8"/><circle cx="966.76" cy="443.00" r="2" fill="#fff" stroke="#13c2c2" stroke-width="1.8"/><circle cx="980.88" cy="443.00" r="2" fill="#fff" stroke="#13c2c2" stroke-width="1.8"/>
<path d="M303.50 311.60 C303.50 311.60 310.55 311.00 317.61 310.60 C324.66 310.20 324.67 310.00 331.72 310.00 C338.78 310.00 338.78 310.35 345.84 310.60 C352.89 310.85 352.92 310.60 359.95 311.00 C367.03 311.40 367.03 311.80 374.06 312.90 C381.14 314.00 381.08 314.43 388.17 315.40 C395.19 316.36 399.53 315.40 402.28 316.75 C413.64 322.32 410.02 344.97 416.40 373.50 C424.13 408.10 425.45 443.00 430.51 443.00 C439.56 443.00 432.07 374.25 444.62 316.90 C446.18 309.75 451.27 310.14 458.73 309.75 C465.39 309.40 465.79 309.71 472.84 309.40 C479.91 309.09 479.89 308.50 486.96 308.50 C494.01 308.50 494.01 308.75 501.07 308.75 C508.12 308.75 508.12 308.75 515.18 308.75 C522.24 308.75 522.24 308.71 529.29 308.50 C536.35 308.29 536.35 307.90 543.40 307.90 C550.46 307.90 550.77 307.90 557.52 308.50 C564.88 309.16 564.42 312.04 571.63 314.75 C578.53 317.34 579.03 319.10 585.74 319.10 C593.14 319.10 598.31 311.00 599.85 311.00 C612.42 311.00 606.82 443.00 613.96 443.00 C620.93 443.00 615.43 357.61 628.08 314.40 C629.54 309.40 634.93 310.09 642.19 309.40 C649.04 308.75 649.24 309.07 656.30 308.75 C663.36 308.43 663.36 308.10 670.41 308.10 C677.47 308.10 677.47 308.75 684.52 308.75 C691.58 308.75 691.58 308.10 698.64 308.10 C705.69 308.10 705.70 308.10 712.75 308.10 C719.81 308.10 719.81 308.75 726.86 308.75 C733.92 308.75 734.05 307.90 740.97 307.90 C748.16 307.90 747.99 311.90 755.08 311.90 C762.10 311.90 762.06 308.50 769.20 308.50 C776.17 308.50 776.53 308.50 783.31 310.00 C790.64 311.62 790.26 316.00 797.42 316.00 C804.37 316.00 804.34 313.10 811.53 311.25 C818.45 309.47 818.54 309.41 825.64 308.75 C832.65 308.10 832.70 308.10 839.76 308.10 C846.81 308.10 846.81 308.75 853.87 308.75 C860.92 308.75 860.92 308.30 867.98 308.10 C875.03 307.90 875.04 307.90 882.09 307.90 C889.15 307.90 889.15 308.10 896.20 308.10 C903.26 308.10 903.30 307.90 910.32 307.90 C917.41 307.90 917.71 307.90 924.43 310.00 C931.82 312.31 931.19 316.90 938.54 316.90 C945.30 316.90 945.67 315.61 952.65 313.75 C959.78 311.86 965.37 309.40 966.76 309.40 C979.48 309.40 980.88 443.00 980.88 443.00" fill="none" stroke="#52c41a" stroke-width="2" stroke-linejoin="round"/><circle cx="303.50" cy="311.60" r="2" fill="#fff" stroke="#52c41a" stroke-width="1.8"/><circle cx="317.61" cy="310.60" r="2" fill="#fff" stroke="#52c41a" stroke-width="1.8"/><circle cx="331.72" cy="310.00" r="2" fill="#fff" stroke="#52c41a" stroke-width="1.8"/><circle cx="345.84" cy="310.60" r="2" fill="#fff" stroke="#52c41a" stroke-width="1.8"/><circle cx="359.95" cy="311.00" r="2" fill="#fff" stroke="#52c41a" stroke-width="1.8"/><circle cx="374.06" cy="312.90" r="2" fill="#fff" stroke="#52c41a" stroke-width="1.8"/><circle cx="388.17" cy="315.40" r="2" fill="#fff" stroke="#52c41a" stroke-width="1.8"/><circle cx="402.28" cy="316.75" r="2" fill="#fff" stroke="#52c41a" stroke-width="1.8"/><circle cx="416.40" cy="373.50" r="2" fill="#fff" stroke="#52c41a" stroke-width="1.8"/><circle cx="430.51" cy="443.00" r="2" fill="#fff" stroke="#52c41a" stroke-width="1.8"/><circle cx="444.62" cy="316.90" r="2" fill="#fff" stroke="#52c41a" stroke-width="1.8"/><circle cx="458.73" cy="309.75" r="2" fill="#fff" stroke="#52c41a" stroke-width="1.8"/><circle cx="472.84" cy="309.40" r="2" fill="#fff" stroke="#52c41a" stroke-width="1.8"/><circle cx="486.96" cy="308.50" r="2" fill="#fff" stroke="#52c41a" stroke-width="1.8"/><circle cx="501.07" cy="308.75" r="2" fill="#fff" stroke="#52c41a" stroke-width="1.8"/><circle cx="515.18" cy="308.75" r="2" fill="#fff" stroke="#52c41a" stroke-width="1.8"/><circle cx="529.29" cy="308.50" r="2" fill="#fff" stroke="#52c41a" stroke-width="1.8"/><circle cx="543.40" cy="307.90" r="2" fill="#fff" stroke="#52c41a" stroke-width="1.8"/><circle cx="557.52" cy="308.50" r="2" fill="#fff" stroke="#52c41a" stroke-width="1.8"/><circle cx="571.63" cy="314.75" r="2" fill="#fff" stroke="#52c41a" stroke-width="1.8"/><circle cx="585.74" cy="319.10" r="2" fill="#fff" stroke="#52c41a" stroke-width="1.8"/><circle cx="599.85" cy="311.00" r="2" fill="#fff" stroke="#52c41a" stroke-width="1.8"/><circle cx="613.96" cy="443.00" r="2" fill="#fff" stroke="#52c41a" stroke-width="1.8"/><circle cx="628.08" cy="314.40" r="2" fill="#fff" stroke="#52c41a" stroke-width="1.8"/><circle cx="642.19" cy="309.40" r="2" fill="#fff" stroke="#52c41a" stroke-width="1.8"/><circle cx="656.30" cy="308.75" r="2" fill="#fff" stroke="#52c41a" stroke-width="1.8"/><circle cx="670.41" cy="308.10" r="2" fill="#fff" stroke="#52c41a" stroke-width="1.8"/><circle cx="684.52" cy="308.75" r="2" fill="#fff" stroke="#52c41a" stroke-width="1.8"/><circle cx="698.64" cy="308.10" r="2" fill="#fff" stroke="#52c41a" stroke-width="1.8"/><circle cx="712.75" cy="308.10" r="2" fill="#fff" stroke="#52c41a" stroke-width="1.8"/><circle cx="726.86" cy="308.75" r="2" fill="#fff" stroke="#52c41a" stroke-width="1.8"/><circle cx="740.97" cy="307.90" r="2" fill="#fff" stroke="#52c41a" stroke-width="1.8"/><circle cx="755.08" cy="311.90" r="2" fill="#fff" stroke="#52c41a" stroke-width="1.8"/><circle cx="769.20" cy="308.50" r="2" fill="#fff" stroke="#52c41a" stroke-width="1.8"/><circle cx="783.31" cy="310.00" r="2" fill="#fff" stroke="#52c41a" stroke-width="1.8"/><circle cx="797.42" cy="316.00" r="2" fill="#fff" stroke="#52c41a" stroke-width="1.8"/><circle cx="811.53" cy="311.25" r="2" fill="#fff" stroke="#52c41a" stroke-width="1.8"/><circle cx="825.64" cy="308.75" r="2" fill="#fff" stroke="#52c41a" stroke-width="1.8"/><circle cx="839.76" cy="308.10" r="2" fill="#fff" stroke="#52c41a" stroke-width="1.8"/><circle cx="853.87" cy="308.75" r="2" fill="#fff" stroke="#52c41a" stroke-width="1.8"/><circle cx="867.98" cy="308.10" r="2" fill="#fff" stroke="#52c41a" stroke-width="1.8"/><circle cx="882.09" cy="307.90" r="2" fill="#fff" stroke="#52c41a" stroke-width="1.8"/><circle cx="896.20" cy="308.10" r="2" fill="#fff" stroke="#52c41a" stroke-width="1.8"/><circle cx="910.32" cy="307.90" r="2" fill="#fff" stroke="#52c41a" stroke-width="1.8"/><circle cx="924.43" cy="310.00" r="2" fill="#fff" stroke="#52c41a" stroke-width="1.8"/><circle cx="938.54" cy="316.90" r="2" fill="#fff" stroke="#52c41a" stroke-width="1.8"/><circle cx="952.65" cy="313.75" r="2" fill="#fff" stroke="#52c41a" stroke-width="1.8"/><circle cx="966.76" cy="309.40" r="2" fill="#fff" stroke="#52c41a" stroke-width="1.8"/><circle cx="980.88" cy="443.00" r="2" fill="#fff" stroke="#52c41a" stroke-width="1.8"/>
<path d="M332.28 420.86 A15.00 15.00 0 1 1 359.39 420.86 C355.53 428.99 345.84 432.50 345.84 443.00 C345.84 432.50 336.14 428.99 332.28 420.86 Z" fill="#13c2c2"/>
<path d="M374.62 420.86 A15.00 15.00 0 1 1 401.72 420.86 C397.87 428.99 388.17 432.50 388.17 443.00 C388.17 432.50 378.48 428.99 374.62 420.86 Z" fill="#2f54eb"/>
<path d="M402.84 420.86 A15.00 15.00 0 1 1 429.95 420.86 C426.09 428.99 416.40 432.50 416.40 443.00 C416.40 432.50 406.70 428.99 402.84 420.86 Z" fill="#eb2f96"/>
<path d="M416.96 420.86 A15.00 15.00 0 1 1 444.06 420.86 C440.20 428.99 430.51 432.50 430.51 443.00 C430.51 432.50 420.81 428.99 416.96 420.86 Z" fill="#52c41a"/>
<path d="M374.62 368.66 A15.00 15.00 0 1 1 401.72 368.66 C397.87 376.79 388.17 380.30 388.17 390.80 C388.17 380.30 378.48 376.79 374.62 368.66 Z" fill="#722ed1"/>
<path d="M416.96 368.66 A15.00 15.00 0 1 1 444.06 368.66 C440.20 376.79 430.51 380.30 430.51 390.80 C430.51 380.30 420.81 376.79 416.96 368.66 Z" fill="#722ed1"/>
<path d="M600.41 420.86 A15.00 15.00 0 1 1 627.52 420.86 C623.66 428.99 613.96 432.50 613.96 443.00 C613.96 432.50 604.27 428.99 600.41 420.86 Z" fill="#2f54eb"/>
<path d="M656.86 420.86 A15.00 15.00 0 1 1 683.96 420.86 C680.11 428.99 670.41 432.50 670.41 443.00 C670.41 432.50 660.72 428.99 656.86 420.86 Z" fill="#eb2f96"/>
<path d="M896.76 285.76 A15.00 15.00 0 1 1 923.87 285.76 C920.01 293.89 910.32 297.40 910.32 307.90 C910.32 297.40 900.62 293.89 896.76 285.76 Z" fill="#52c41a"/>
<text x="345.84" y="419.63" text-anchor="middle" font-size="12" font-weight="normal" fill="#333" font-family="Liberation Sans, sans-serif">0.04</text>
<text x="388.17" y="419.63" text-anchor="middle" font-size="12" font-weight="bold" fill="#fff" stroke="#2f54eb" stroke-width="1.2" paint-order="stroke" font-family="Liberation Sans, sans-serif">-0.04</text>
<text x="416.40" y="419.63" text-anchor="middle" font-size="12" font-weight="bold" fill="#fff" stroke="#eb2f96" stroke-width="1.2" paint-order="stroke" font-family="Liberation Sans, sans-serif">-0.01</text>
<text x="430.51" y="419.63" text-anchor="middle" font-size="12" font-weight="normal" fill="#333" font-family="Liberation Sans, sans-serif">0</text>
<text x="388.17" y="367.43" text-anchor="middle" font-size="12" font-weight="bold" fill="#fff" stroke="#722ed1" stroke-width="1.2" paint-order="stroke" font-family="Liberation Sans, sans-serif">89.95</text>
<text x="430.51" y="367.43" text-anchor="middle" font-size="12" font-weight="bold" fill="#fff" stroke="#722ed1" stroke-width="1.2" paint-order="stroke" font-family="Liberation Sans, sans-serif">90</text>
<text x="613.96" y="419.63" text-anchor="middle" font-size="12" font-weight="bold" fill="#fff" stroke="#2f54eb" stroke-width="1.2" paint-order="stroke" font-family="Liberation Sans, sans-serif">0.01</text>
<text x="670.41" y="419.63" text-anchor="middle" font-size="12" font-weight="bold" fill="#fff" stroke="#eb2f96" stroke-width="1.2" paint-order="stroke" font-family="Liberation Sans, sans-serif">0.04</text>
<text x="910.32" y="284.53" text-anchor="middle" font-size="12" font-weight="normal" fill="#333" font-family="Liberation Sans, sans-serif">233.14</text>
</svg>
<svg style="left:0;top:0" width="1920" height="937">
<rect x="306.90" y="521" width="676.70" height="8" fill="#dde3ee" rx="2"/>
<rect x="306.90" y="529" width="676.70" height="29" fill="#e7eefd"/>
<polygon points="306.90,558 306.90,545.10 321.00,548.40 335.10,548.40 349.19,548.40 363.29,548.40 377.39,548.40 391.49,552.00 405.59,548.40 419.68,540.50 433.78,536.90 447.88,544.20 461.98,548.40 476.07,548.40 490.17,548.40 504.27,548.40 518.37,548.40 532.47,548.40 546.56,544.20 560.66,544.20 574.76,544.20 588.86,544.20 602.96,540.50 617.05,533.20 631.15,548.40 645.25,548.40 659.35,548.40 673.45,548.40 687.54,548.40 701.64,548.40 715.74,548.40 729.84,548.40 743.94,548.40 758.03,544.20 772.13,544.20 786.23,544.20 800.33,540.50 814.42,548.40 828.52,548.40 842.62,548.40 856.72,548.40 870.82,548.40 884.91,548.40 899.01,548.40 913.11,548.40 927.21,548.40 941.31,552.00 955.40,540.50 969.50,544.20 983.60,537.50 983.60,558" fill="#d3e0fa"/>
<polyline points="306.90,545.10 321.00,548.40 335.10,548.40 349.19,548.40 363.29,548.40 377.39,548.40 391.49,552.00 405.59,548.40 419.68,540.50 433.78,536.90 447.88,544.20 461.98,548.40 476.07,548.40 490.17,548.40 504.27,548.40 518.37,548.40 532.47,548.40 546.56,544.20 560.66,544.20 574.76,544.20 588.86,544.20 602.96,540.50 617.05,533.20 631.15,548.40 645.25,548.40 659.35,548.40 673.45,548.40 687.54,548.40 701.64,548.40 715.74,548.40 729.84,548.40 743.94,548.40 758.03,544.20 772.13,544.20 786.23,544.20 800.33,540.50 814.42,548.40 828.52,548.40 842.62,548.40 856.72,548.40 870.82,548.40 884.91,548.40 899.01,548.40 913.11,548.40 927.21,548.40 941.31,552.00 955.40,540.50 969.50,544.20 983.60,537.50" fill="none" stroke="#9cb7f5" stroke-width="1"/>
<path d="M306.90 529 V558" stroke="#aab4c8" stroke-width="1.2"/>
<rect x="303.90" y="533.5" width="6" height="18.5" rx="2" fill="#fff" stroke="#aab4c8" stroke-width="1"/>
<path d="M983.60 529 V558" stroke="#aab4c8" stroke-width="1.2"/>
<rect x="980.60" y="533.5" width="6" height="18.5" rx="2" fill="#fff" stroke="#aab4c8" stroke-width="1"/>
<path d="M642.2 523 V527 M645.2 523 V527 M648.2 523 V527" stroke="#fff" stroke-width="1"/>
</svg>
<div class="r" style="left:1069px;top:237px;width:825px;height:350px;border:1px solid #d9d9d9"></div>
<div class="t" style="left:1074px;top:239.5px;font-size:18px;line-height:24px;color:#464646;font-weight:bold;">【西边坡】QJ02</div>
<svg style="left:1846px;top:244px" width="18" height="18" viewBox="0 0 18 18"><path d="M1.5 8.5 A7.3 7.3 0 0 1 15.3 5.3 M16.3 9.5 A7.3 7.3 0 0 1 2.5 12.6" fill="none" stroke="#666" stroke-width="1.2"/><path d="M16 3 L15.6 6.3 L12.4 5.6 Z M1.8 15 L2.2 11.7 L5.4 12.4 Z" fill="#666" stroke="#666" stroke-width="0.8"/></svg>
<svg style="left:1875px;top:245px" width="15" height="17" viewBox="0 0 15 17"><path d="M7.5 0.5 V11.5 M1 6 L7.5 12 L14 6 M0.8 10.5 V15.5 H14.2 V10.5" fill="none" stroke="#666" stroke-width="1.3"/></svg>
<svg style="left:1159px;top:263px" width="25" height="14" viewBox="0 0 25 14"><path d="M0 7.3 H25" stroke="#2f54eb" stroke-width="2"/><circle cx="12.5" cy="7.3" r="5.2" fill="#fff" stroke="#2f54eb" stroke-width="2"/></svg>
<div class="t" style="left:1189.5px;top:260.5px;font-size:12px;line-height:20px;color:#333;font-weight:normal;">X轴方向倾斜角度</div>
<svg style="left:1292px;top:263px" width="25" height="14" viewBox="0 0 25 14"><path d="M0 7.3 H25" stroke="#eb2f96" stroke-width="2"/><circle cx="12.5" cy="7.3" r="5.2" fill="#fff" stroke="#eb2f96" stroke-width="2"/></svg>
<div class="t" style="left:1322.5px;top:260.5px;font-size:12px;line-height:20px;color:#333;font-weight:normal;">Y轴方向倾斜角度</div>
<svg style="left:1424px;top:263px" width="25" height="14" viewBox="0 0 25 14"><path d="M0 7.3 H25" stroke="#722ed1" stroke-width="2"/><circle cx="12.5" cy="7.3" r="5.2" fill="#fff" stroke="#722ed1" stroke-width="2"/></svg>
<div class="t" style="left:1454.5px;top:260.5px;font-size:12px;line-height:20px;color:#333;font-weight:normal;">Z轴的自转角度</div>
<svg style="left:1544px;top:263px" width="25" height="14" viewBox="0 0 25 14"><path d="M0 7.3 H25" stroke="#13c2c2" stroke-width="2"/><circle cx="12.5" cy="7.3" r="5.2" fill="#fff" stroke="#13c2c2" stroke-width="2"/></svg>
<div class="t" style="left:1574.5px;top:260.5px;font-size:12px;line-height:20px;color:#333;font-weight:normal;">xy轴合成方位角倾斜角度</div>
<svg style="left:1718px;top:263px" width="25" height="14" viewBox="0 0 25 14"><path d="M0 7.3 H25" stroke="#52c41a" stroke-width="2"/><circle cx="12.5" cy="7.3" r="5.2" fill="#fff" stroke="#52c41a" stroke-width="2"/></svg>
<div class="t" style="left:1748.5px;top:260.5px;font-size:12px;line-height:20px;color:#333;font-weight:normal;">合成方位角</div>
<div class="t" style="left:565px;width:600px;text-align:right;top:264.5px;font-size:13px;line-height:20px;color:#6e7079;font-weight:normal;">倾角</div>
<svg style="left:0;top:0" width="1920" height="937">
<path d="M1152.5 298.50 H1830.08" stroke="#e0e6f1" stroke-width="1"/>
<path d="M1152.5 322.50 H1830.08" stroke="#e0e6f1" stroke-width="1"/>
<path d="M1152.5 347.50 H1830.08" stroke="#e0e6f1" stroke-width="1"/>
<path d="M1152.5 372.50 H1830.08" stroke="#e0e6f1" stroke-width="1"/>
<path d="M1152.5 397.50 H1830.08" stroke="#e0e6f1" stroke-width="1"/>
<path d="M1152.5 422.50 H1830.08" stroke="#e0e6f1" stroke-width="1"/>
<path d="M1152.5 447.50 H1830.08" stroke="#e0e6f1" stroke-width="1"/>
<path d="M1152.50 297.50 V471.50" stroke="#6e7079" stroke-width="1"/>
<path d="M1152.50 471.50 H1830.08" stroke="#6e7079" stroke-width="1"/>
<path d="M1152.50 471.50 V476.50" stroke="#6e7079" stroke-width="1"/>
<path d="M1314.50 471.50 V476.50" stroke="#6e7079" stroke-width="1"/>
<path d="M1476.50 471.50 V476.50" stroke="#6e7079" stroke-width="1"/>
<path d="M1638.50 471.50 V476.50" stroke="#6e7079" stroke-width="1"/>
<path d="M1800.50 471.50 V476.50" stroke="#6e7079" stroke-width="1"/>
</svg>
<div class="t" style="left:540.5px;width:600px;text-align:right;top:287.0px;font-size:12px;line-height:20px;color:#6e7079;font-weight:normal;">300</div>
<div class="t" style="left:540.5px;width:600px;text-align:right;top:311.9px;font-size:12px;line-height:20px;color:#6e7079;font-weight:normal;">250</div>
<div class="t" style="left:540.5px;width:600px;text-align:right;top:336.7px;font-size:12px;line-height:20px;color:#6e7079;font-weight:normal;">200</div>
<div class="t" style="left:540.5px;width:600px;text-align:right;top:361.6px;font-size:12px;line-height:20px;color:#6e7079;font-weight:normal;">150</div>
<div class="t" style="left:540.5px;width:600px;text-align:right;top:386.4px;font-size:12px;line-height:20px;color:#6e7079;font-weight:normal;">100</div>
<div class="t" style="left:540.5px;width:600px;text-align:right;top:411.3px;font-size:12px;line-height:20px;color:#6e7079;font-weight:normal;">50</div>
<div class="t" style="left:540.5px;width:600px;text-align:right;top:436.1px;font-size:12px;line-height:20px;color:#6e7079;font-weight:normal;">0</div>
<div class="t" style="left:540.5px;width:600px;text-align:right;top:461.0px;font-size:12px;line-height:20px;color:#6e7079;font-weight:normal;">-50</div>
<div class="t" style="left:852.5px;width:600px;text-align:center;top:474.5px;font-size:12px;line-height:20px;color:#6e7079;font-weight:normal;letter-spacing:0.45px">2023/08/11 01:31:15</div>
<div class="t" style="left:1014.53px;width:600px;text-align:center;top:474.5px;font-size:12px;line-height:20px;color:#6e7079;font-weight:normal;letter-spacing:0.45px">2023/08/11 22:05:12</div>
<div class="t" style="left:1176.56px;width:600px;text-align:center;top:474.5px;font-size:12px;line-height:20px;color:#6e7079;font-weight:normal;letter-spacing:0.45px">2023/08/12 20:39:42</div>
<div class="t" style="left:1338.5900000000001px;width:600px;text-align:center;top:474.5px;font-size:12px;line-height:20px;color:#6e7079;font-weight:normal;letter-spacing:0.45px">2023/08/13 17:14:01</div>
<div class="t" style="left:1500.62px;width:600px;text-align:center;top:474.5px;font-size:12px;line-height:20px;color:#6e7079;font-weight:normal;letter-spacing:0.45px">2023/08/14 13:48:03</div>
<div class="t" style="left:1844.08px;top:460.5px;font-size:12px;line-height:20px;color:#6e7079;font-weight:normal;">时间</div>
<svg style="left:0;top:0" width="1920" height="937">
<path d="M1152.50 402.40 C1152.50 402.40 1159.87 402.40 1167.23 402.40 C1174.60 402.40 1174.60 402.40 1181.96 402.40 C1189.33 402.40 1189.33 402.40 1196.69 402.40 C1204.06 402.40 1204.06 402.40 1211.42 402.40 C1218.79 402.40 1218.79 402.40 1226.15 402.40 C1233.52 402.40 1233.52 402.40 1240.88 402.40 C1248.24 402.40 1248.24 402.40 1255.61 402.40 C1262.98 402.40 1262.97 402.40 1270.34 402.40 C1277.70 402.40 1277.70 402.40 1285.07 402.40 C1292.43 402.40 1292.43 402.40 1299.80 402.40 C1307.16 402.40 1307.16 402.40 1314.53 402.40 C1321.89 402.40 1321.89 402.40 1329.26 402.40 C1336.62 402.40 1336.62 402.40 1343.99 402.40 C1351.36 402.40 1351.36 402.40 1358.72 402.40 C1366.09 402.40 1366.09 402.40 1373.45 402.40 C1380.82 402.40 1380.82 402.40 1388.18 402.40 C1395.55 402.40 1395.54 402.40 1402.91 402.40 C1410.28 402.40 1410.28 402.40 1417.64 402.40 C1425.00 402.40 1425.00 402.40 1432.37 402.40 C1439.73 402.40 1439.73 402.40 1447.10 402.40 C1454.46 402.40 1454.46 402.40 1461.83 402.40 C1469.19 402.40 1469.19 402.40 1476.56 402.40 C1483.92 402.40 1483.92 402.40 1491.29 402.40 C1498.65 402.40 1498.65 402.40 1506.02 402.40 C1513.38 402.40 1513.38 402.40 1520.75 402.40 C1528.12 402.40 1528.12 402.40 1535.48 402.40 C1542.85 402.40 1542.85 402.40 1550.21 402.40 C1557.58 402.40 1557.58 402.40 1564.94 402.40 C1572.31 402.40 1572.31 402.40 1579.67 402.40 C1587.04 402.40 1587.04 402.40 1594.40 402.40 C1601.77 402.40 1601.77 402.40 1609.13 402.40 C1616.50 402.40 1616.50 402.40 1623.86 402.40 C1631.23 402.40 1631.23 402.40 1638.59 402.40 C1645.95 402.40 1645.95 402.40 1653.32 402.40 C1660.69 402.40 1660.69 402.40 1668.05 402.40 C1675.41 402.40 1675.41 402.40 1682.78 402.40 C1690.15 402.40 1690.14 402.40 1697.51 402.40 C1704.88 402.40 1704.88 402.40 1712.24 402.40 C1719.61 402.40 1719.61 402.40 1726.97 402.40 C1734.34 402.40 1734.34 402.40 1741.70 402.40 C1749.07 402.40 1749.06 402.40 1756.43 402.40 C1763.80 402.40 1763.80 402.40 1771.16 402.40 C1778.52 402.40 1778.52 402.40 1785.89 402.40 C1793.25 402.40 1793.25 402.40 1800.62 402.40 C1807.98 402.40 1807.98 402.40 1815.35 402.40 C1822.71 402.40 1830.08 402.40 1830.08 402.40" fill="none" stroke="#722ed1" stroke-width="2" stroke-linejoin="round"/><circle cx="1152.50" cy="402.40" r="2" fill="#fff" stroke="#722ed1" stroke-width="1.8"/><circle cx="1167.23" cy="402.40" r="2" fill="#fff" stroke="#722ed1" stroke-width="1.8"/><circle cx="1181.96" cy="402.40" r="2" fill="#fff" stroke="#722ed1" stroke-width="1.8"/><circle cx="1196.69" cy="402.40" r="2" fill="#fff" stroke="#722ed1" stroke-width="1.8"/><circle cx="1211.42" cy="402.40" r="2" fill="#fff" stroke="#722ed1" stroke-width="1.8"/><circle cx="1226.15" cy="402.40" r="2" fill="#fff" stroke="#722ed1" stroke-width="1.8"/><circle cx="1240.88" cy="402.40" r="2" fill="#fff" stroke="#722ed1" stroke-width="1.8"/><circle cx="1255.61" cy="402.40" r="2" fill="#fff" stroke="#722ed1" stroke-width="1.8"/><circle cx="1270.34" cy="402.40" r="2" fill="#fff" stroke="#722ed1" stroke-width="1.8"/><circle cx="1285.07" cy="402.40" r="2" fill="#fff" stroke="#722ed1" stroke-width="1.8"/><circle cx="1299.80" cy="402.40" r="2" fill="#fff" stroke="#722ed1" stroke-width="1.8"/><circle cx="1314.53" cy="402.40" r="2" fill="#fff" stroke="#722ed1" stroke-width="1.8"/><circle cx="1329.26" cy="402.40" r="2" fill="#fff" stroke="#722ed1" stroke-width="1.8"/><circle cx="1343.99" cy="402.40" r="2" fill="#fff" stroke="#722ed1" stroke-width="1.8"/><circle cx="1358.72" cy="402.40" r="2" fill="#fff" stroke="#722ed1" stroke-width="1.8"/><circle cx="1373.45" cy="402.40" r="2" fill="#fff" stroke="#722ed1" stroke-width="1.8"/><circle cx="1388.18" cy="402.40" r="2" fill="#fff" stroke="#722ed1" stroke-width="1.8"/><circle cx="1402.91" cy="402.40" r="2" fill="#fff" stroke="#722ed1" stroke-width="1.8"/><circle cx="1417.64" cy="402.40" r="2" fill="#fff" stroke="#722ed1" stroke-width="1.8"/><circle cx="1432.37" cy="402.40" r="2" fill="#fff" stroke="#722ed1" stroke-width="1.8"/><circle cx="1447.10" cy="402.40" r="2" fill="#fff" stroke="#722ed1" stroke-width="1.8"/><circle cx="1461.83" cy="402.40" r="2" fill="#fff" stroke="#722ed1" stroke-width="1.8"/><circle cx="1476.56" cy="402.40" r="2" fill="#fff" stroke="#722ed1" stroke-width="1.8"/><circle cx="1491.29" cy="402.40" r="2" fill="#fff" stroke="#722ed1" stroke-width="1.8"/><circle cx="1506.02" cy="402.40" r="2" fill="#fff" stroke="#722ed1" stroke-width="1.8"/><circle cx="1520.75" cy="402.40" r="2" fill="#fff" stroke="#722ed1" stroke-width="1.8"/><circle cx="1535.48" cy="402.40" r="2" fill="#fff" stroke="#722ed1" stroke-width="1.8"/><circle cx="1550.21" cy="402.40" r="2" fill="#fff" stroke="#722ed1" stroke-width="1.8"/><circle cx="1564.94" cy="402.40" r="2" fill="#fff" stroke="#722ed1" stroke-width="1.8"/><circle cx="1579.67" cy="402.40" r="2" fill="#fff" stroke="#722ed1" stroke-width="1.8"/><circle cx="1594.40" cy="402.40" r="2" fill="#fff" stroke="#722ed1" stroke-width="1.8"/><circle cx="1609.13" cy="402.40" r="2" fill="#fff" stroke="#722ed1" stroke-width="1.8"/><circle cx="1623.86" cy="402.40" r="2" fill="#fff" stroke="#722ed1" stroke-width="1.8"/><circle cx="1638.59" cy="402.40" r="2" fill="#fff" stroke="#722ed1" stroke-width="1.8"/><circle cx="1653.32" cy="402.40" r="2" fill="#fff" stroke="#722ed1" stroke-width="1.8"/><circle cx="1668.05" cy="402.40" r="2" fill="#fff" stroke="#722ed1" stroke-width="1.8"/><circle cx="1682.78" cy="402.40" r="2" fill="#fff" stroke="#722ed1" stroke-width="1.8"/><circle cx="1697.51" cy="402.40" r="2" fill="#fff" stroke="#722ed1" stroke-width="1.8"/><circle cx="1712.24" cy="402.40" r="2" fill="#fff" stroke="#722ed1" stroke-width="1.8"/><circle cx="1726.97" cy="402.40" r="2" fill="#fff" stroke="#722ed1" stroke-width="1.8"/><circle cx="1741.70" cy="402.40" r="2" fill="#fff" stroke="#722ed1" stroke-width="1.8"/><circle cx="1756.43" cy="402.40" r="2" fill="#fff" stroke="#722ed1" stroke-width="1.8"/><circle cx="1771.16" cy="402.40" r="2" fill="#fff" stroke="#722ed1" stroke-width="1.8"/><circle cx="1785.89" cy="402.40" r="2" fill="#fff" stroke="#722ed1" stroke-width="1.8"/><circle cx="1800.62" cy="402.40" r="2" fill="#fff" stroke="#722ed1" stroke-width="1.8"/><circle cx="1815.35" cy="402.40" r="2" fill="#fff" stroke="#722ed1" stroke-width="1.8"/><circle cx="1830.08" cy="402.40" r="2" fill="#fff" stroke="#722ed1" stroke-width="1.8"/>
<path d="M1152.50 447.14 C1152.50 447.14 1159.87 447.14 1167.23 447.14 C1174.60 447.14 1174.60 447.14 1181.96 447.14 C1189.33 447.14 1189.33 447.14 1196.69 447.14 C1204.06 447.14 1204.06 447.14 1211.42 447.14 C1218.79 447.14 1218.79 447.14 1226.15 447.14 C1233.52 447.14 1233.52 447.14 1240.88 447.14 C1248.24 447.14 1248.24 447.14 1255.61 447.14 C1262.98 447.14 1262.97 447.14 1270.34 447.14 C1277.70 447.14 1277.70 447.14 1285.07 447.14 C1292.43 447.14 1292.43 447.14 1299.80 447.14 C1307.16 447.14 1307.16 447.14 1314.53 447.14 C1321.89 447.14 1321.89 447.14 1329.26 447.14 C1336.62 447.14 1336.62 447.14 1343.99 447.14 C1351.36 447.14 1351.36 447.14 1358.72 447.14 C1366.09 447.14 1366.09 447.14 1373.45 447.14 C1380.82 447.14 1380.82 447.14 1388.18 447.14 C1395.55 447.14 1395.54 447.14 1402.91 447.14 C1410.28 447.14 1410.28 447.14 1417.64 447.14 C1425.00 447.14 1425.00 447.14 1432.37 447.14 C1439.73 447.14 1439.73 447.14 1447.10 447.14 C1454.46 447.14 1454.46 447.14 1461.83 447.14 C1469.19 447.14 1469.19 447.14 1476.56 447.14 C1483.92 447.14 1483.92 447.14 1491.29 447.14 C1498.65 447.14 1498.65 447.14 1506.02 447.14 C1513.38 447.14 1513.38 447.14 1520.75 447.14 C1528.12 447.14 1528.12 447.14 1535.48 447.14 C1542.85 447.14 1542.85 447.14 1550.21 447.14 C1557.58 447.14 1557.58 447.14 1564.94 447.14 C1572.31 447.14 1572.31 447.14 1579.67 447.14 C1587.04 447.14 1587.04 447.14 1594.40 447.14 C1601.77 447.14 1601.77 447.14 1609.13 447.14 C1616.50 447.14 1616.50 447.14 1623.86 447.14 C1631.23 447.14 1631.23 447.14 1638.59 447.14 C1645.95 447.14 1645.95 447.14 1653.32 447.14 C1660.69 447.14 1660.69 447.14 1668.05 447.14 C1675.41 447.14 1675.41 447.14 1682.78 447.14 C1690.15 447.14 1690.14 447.14 1697.51 447.14 C1704.88 447.14 1704.88 447.14 1712.24 447.14 C1719.61 447.14 1719.61 447.14 1726.97 447.14 C1734.34 447.14 1734.34 447.14 1741.70 447.14 C1749.07 447.14 1749.06 447.14 1756.43 447.14 C1763.80 447.14 1763.80 447.14 1771.16 447.14 C1778.52 447.14 1778.52 447.14 1785.89 447.14 C1793.25 447.14 1793.25 447.14 1800.62 447.14 C1807.98 447.14 1807.98 447.14 1815.35 447.14 C1822.71 447.14 1830.08 447.14 1830.08 447.14" fill="none" stroke="#13c2c2" stroke-width="2" stroke-linejoin="round"/><circle cx="1152.50" cy="447.14" r="2" fill="#fff" stroke="#13c2c2" stroke-width="1.8"/><circle cx="1167.23" cy="447.14" r="2" fill="#fff" stroke="#13c2c2" stroke-width="1.8"/><circle cx="1181.96" cy="447.14" r="2" fill="#fff" stroke="#13c2c2" stroke-width="1.8"/><circle cx="1196.69" cy="447.14" r="2" fill="#fff" stroke="#13c2c2" stroke-width="1.8"/><circle cx="1211.42" cy="447.14" r="2" fill="#fff" stroke="#13c2c2" stroke-width="1.8"/><circle cx="1226.15" cy="447.14" r="2" fill="#fff" stroke="#13c2c2" stroke-width="1.8"/><circle cx="1240.88" cy="447.14" r="2" fill="#fff" stroke="#13c2c2" stroke-width="1.8"/><circle cx="1255.61" cy="447.14" r="2" fill="#fff" stroke="#13c2c2" stroke-width="1.8"/><circle cx="1270.34" cy="447.14" r="2" fill="#fff" stroke="#13c2c2" stroke-width="1.8"/><circle cx="1285.07" cy="447.14" r="2" fill="#fff" stroke="#13c2c2" stroke-width="1.8"/><circle cx="1299.80" cy="447.14" r="2" fill="#fff" stroke="#13c2c2" stroke-width="1.8"/><circle cx="1314.53" cy="447.14" r="2" fill="#fff" stroke="#13c2c2" stroke-width="1.8"/><circle cx="1329.26" cy="447.14" r="2" fill="#fff" stroke="#13c2c2" stroke-width="1.8"/><circle cx="1343.99" cy="447.14" r="2" fill="#fff" stroke="#13c2c2" stroke-width="1.8"/><circle cx="1358.72" cy="447.14" r="2" fill="#fff" stroke="#13c2c2" stroke-width="1.8"/><circle cx="1373.45" cy="447.14" r="2" fill="#fff" stroke="#13c2c2" stroke-width="1.8"/><circle cx="1388.18" cy="447.14" r="2" fill="#fff" stroke="#13c2c2" stroke-width="1.8"/><circle cx="1402.91" cy="447.14" r="2" fill="#fff" stroke="#13c2c2" stroke-width="1.8"/><circle cx="1417.64" cy="447.14" r="2" fill="#fff" stroke="#13c2c2" stroke-width="1.8"/><circle cx="1432.37" cy="447.14" r="2" fill="#fff" stroke="#13c2c2" stroke-width="1.8"/><circle cx="1447.10" cy="447.14" r="2" fill="#fff" stroke="#13c2c2" stroke-width="1.8"/><circle cx="1461.83" cy="447.14" r="2" fill="#fff" stroke="#13c2c2" stroke-width="1.8"/><circle cx="1476.56" cy="447.14" r="2" fill="#fff" stroke="#13c2c2" stroke-width="1.8"/><circle cx="1491.29" cy="447.14" r="2" fill="#fff" stroke="#13c2c2" stroke-width="1.8"/><circle cx="1506.02" cy="447.14" r="2" fill="#fff" stroke="#13c2c2" stroke-width="1.8"/><circle cx="1520.75" cy="447.14" r="2" fill="#fff" stroke="#13c2c2" stroke-width="1.8"/><circle cx="1535.48" cy="447.14" r="2" fill="#fff" stroke="#13c2c2" stroke-width="1.8"/><circle cx="1550.21" cy="447.14" r="2" fill="#fff" stroke="#13c2c2" stroke-width="1.8"/><circle cx="1564.94" cy="447.14" r="2" fill="#fff" stroke="#13c2c2" stroke-width="1.8"/><circle cx="1579.67" cy="447.14" r="2" fill="#fff" stroke="#13c2c2" stroke-width="1.8"/><circle cx="1594.40" cy="447.14" r="2" fill="#fff" stroke="#13c2c2" stroke-width="1.8"/><circle cx="1609.13" cy="447.14" r="2" fill="#fff" stroke="#13c2c2" stroke-width="1.8"/><circle cx="1623.86" cy="447.14" r="2" fill="#fff" stroke="#13c2c2" stroke-width="1.8"/><circle cx="1638.59" cy="447.14" r="2" fill="#fff" stroke="#13c2c2" stroke-width="1.8"/><circle cx="1653.32" cy="447.14" r="2" fill="#fff" stroke="#13c2c2" stroke-width="1.8"/><circle cx="1668.05" cy="447.14" r="2" fill="#fff" stroke="#13c2c2" stroke-width="1.8"/><circle cx="1682.78" cy="447.14" r="2" fill="#fff" stroke="#13c2c2" stroke-width="1.8"/><circle cx="1697.51" cy="447.14" r="2" fill="#fff" stroke="#13c2c2" stroke-width="1.8"/><circle cx="1712.24" cy="447.14" r="2" fill="#fff" stroke="#13c2c2" stroke-width="1.8"/><circle cx="1726.97" cy="447.14" r="2" fill="#fff" stroke="#13c2c2" stroke-width="1.8"/><circle cx="1741.70" cy="447.14" r="2" fill="#fff" stroke="#13c2c2" stroke-width="1.8"/><circle cx="1756.43" cy="447.14" r="2" fill="#fff" stroke="#13c2c2" stroke-width="1.8"/><circle cx="1771.16" cy="447.14" r="2" fill="#fff" stroke="#13c2c2" stroke-width="1.8"/><circle cx="1785.89" cy="447.14" r="2" fill="#fff" stroke="#13c2c2" stroke-width="1.8"/><circle cx="1800.62" cy="447.14" r="2" fill="#fff" stroke="#13c2c2" stroke-width="1.8"/><circle cx="1815.35" cy="447.14" r="2" fill="#fff" stroke="#13c2c2" stroke-width="1.8"/><circle cx="1830.08" cy="447.14" r="2" fill="#fff" stroke="#13c2c2" stroke-width="1.8"/>
<path d="M1152.50 323.70 C1152.50 323.70 1159.86 323.90 1167.23 323.90 C1174.59 323.90 1174.60 323.90 1181.96 323.90 C1189.33 323.90 1189.33 323.75 1196.69 323.40 C1204.06 323.05 1204.06 322.95 1211.42 322.50 C1218.79 322.05 1219.03 321.60 1226.15 321.60 C1233.76 321.60 1233.33 327.20 1240.88 327.20 C1248.06 327.20 1248.19 324.50 1255.61 324.50 C1262.92 324.50 1263.02 325.10 1270.34 325.10 C1277.75 325.10 1277.66 322.80 1285.07 322.80 C1292.39 322.80 1292.43 323.10 1299.80 323.10 C1307.16 323.10 1307.16 322.80 1314.53 322.80 C1321.89 322.80 1321.90 322.80 1329.26 322.80 C1336.63 322.80 1336.62 322.20 1343.99 322.20 C1351.35 322.20 1351.36 322.50 1358.72 322.50 C1366.09 322.50 1366.09 322.42 1373.45 322.20 C1380.82 321.97 1380.81 321.60 1388.18 321.60 C1395.54 321.60 1395.55 321.60 1402.91 321.60 C1410.28 321.60 1410.27 322.20 1417.64 322.50 C1425.00 322.80 1425.00 322.80 1432.37 322.80 C1439.73 322.80 1439.74 322.72 1447.10 322.50 C1454.47 322.27 1454.46 321.90 1461.83 321.90 C1469.19 321.90 1469.20 321.90 1476.56 321.90 C1483.93 321.90 1483.92 322.05 1491.29 322.20 C1498.65 322.35 1498.65 322.50 1506.02 322.50 C1513.38 322.50 1513.38 322.35 1520.75 322.20 C1528.12 322.05 1528.11 321.90 1535.48 321.90 C1542.84 321.90 1542.85 321.90 1550.21 321.90 C1557.58 321.90 1557.57 321.60 1564.94 321.60 C1572.30 321.60 1572.32 321.60 1579.67 321.60 C1587.05 321.60 1587.03 320.50 1594.40 320.50 C1601.76 320.50 1601.76 321.02 1609.13 321.30 C1616.49 321.57 1616.50 321.30 1623.86 321.60 C1631.23 321.90 1631.23 322.50 1638.59 322.50 C1645.95 322.50 1645.95 321.60 1653.32 321.60 C1660.68 321.60 1660.68 321.90 1668.05 321.90 C1675.41 321.90 1675.41 321.90 1682.78 321.90 C1690.15 321.90 1690.15 321.90 1697.51 321.90 C1704.88 321.90 1704.87 322.20 1712.24 322.20 C1719.60 322.20 1719.61 322.20 1726.97 322.20 C1734.34 322.20 1734.34 322.20 1741.70 322.20 C1749.07 322.20 1749.08 322.20 1756.43 321.90 C1763.81 321.60 1763.80 321.22 1771.16 320.50 C1778.53 319.77 1778.64 319.00 1785.89 319.00 C1793.37 319.00 1793.15 323.10 1800.62 323.10 C1807.88 323.10 1807.96 321.00 1815.35 321.00 C1822.69 321.00 1830.08 322.20 1830.08 322.20" fill="none" stroke="#52c41a" stroke-width="2" stroke-linejoin="round"/><circle cx="1152.50" cy="323.70" r="2" fill="#fff" stroke="#52c41a" stroke-width="1.8"/><circle cx="1167.23" cy="323.90" r="2" fill="#fff" stroke="#52c41a" stroke-width="1.8"/><circle cx="1181.96" cy="323.90" r="2" fill="#fff" stroke="#52c41a" stroke-width="1.8"/><circle cx="1196.69" cy="323.40" r="2" fill="#fff" stroke="#52c41a" stroke-width="1.8"/><circle cx="1211.42" cy="322.50" r="2" fill="#fff" stroke="#52c41a" stroke-width="1.8"/><circle cx="1226.15" cy="321.60" r="2" fill="#fff" stroke="#52c41a" stroke-width="1.8"/><circle cx="1240.88" cy="327.20" r="2" fill="#fff" stroke="#52c41a" stroke-width="1.8"/><circle cx="1255.61" cy="324.50" r="2" fill="#fff" stroke="#52c41a" stroke-width="1.8"/><circle cx="1270.34" cy="325.10" r="2" fill="#fff" stroke="#52c41a" stroke-width="1.8"/><circle cx="1285.07" cy="322.80" r="2" fill="#fff" stroke="#52c41a" stroke-width="1.8"/><circle cx="1299.80" cy="323.10" r="2" fill="#fff" stroke="#52c41a" stroke-width="1.8"/><circle cx="1314.53" cy="322.80" r="2" fill="#fff" stroke="#52c41a" stroke-width="1.8"/><circle cx="1329.26" cy="322.80" r="2" fill="#fff" stroke="#52c41a" stroke-width="1.8"/><circle cx="1343.99" cy="322.20" r="2" fill="#fff" stroke="#52c41a" stroke-width="1.8"/><circle cx="1358.72" cy="322.50" r="2" fill="#fff" stroke="#52c41a" stroke-width="1.8"/><circle cx="1373.45" cy="322.20" r="2" fill="#fff" stroke="#52c41a" stroke-width="1.8"/><circle cx="1388.18" cy="321.60" r="2" fill="#fff" stroke="#52c41a" stroke-width="1.8"/><circle cx="1402.91" cy="321.60" r="2" fill="#fff" stroke="#52c41a" stroke-width="1.8"/><circle cx="1417.64" cy="322.50" r="2" fill="#fff" stroke="#52c41a" stroke-width="1.8"/><circle cx="1432.37" cy="322.80" r="2" fill="#fff" stroke="#52c41a" stroke-width="1.8"/><circle cx="1447.10" cy="322.50" r="2" fill="#fff" stroke="#52c41a" stroke-width="1.8"/><circle cx="1461.83" cy="321.90" r="2" fill="#fff" stroke="#52c41a" stroke-width="1.8"/><circle cx="1476.56" cy="321.90" r="2" fill="#fff" stroke="#52c41a" stroke-width="1.8"/><circle cx="1491.29" cy="322.20" r="2" fill="#fff" stroke="#52c41a" stroke-width="1.8"/><circle cx="1506.02" cy="322.50" r="2" fill="#fff" stroke="#52c41a" stroke-width="1.8"/><circle cx="1520.75" cy="322.20" r="2" fill="#fff" stroke="#52c41a" stroke-width="1.8"/><circle cx="1535.48" cy="321.90" r="2" fill="#fff" stroke="#52c41a" stroke-width="1.8"/><circle cx="1550.21" cy="321.90" r="2" fill="#fff" stroke="#52c41a" stroke-width="1.8"/><circle cx="1564.94" cy="321.60" r="2" fill="#fff" stroke="#52c41a" stroke-width="1.8"/><circle cx="1579.67" cy="321.60" r="2" fill="#fff" stroke="#52c41a" stroke-width="1.8"/><circle cx="1594.40" cy="320.50" r="2" fill="#fff" stroke="#52c41a" stroke-width="1.8"/><circle cx="1609.13" cy="321.30" r="2" fill="#fff" stroke="#52c41a" stroke-width="1.8"/><circle cx="1623.86" cy="321.60" r="2" fill="#fff" stroke="#52c41a" stroke-width="1.8"/><circle cx="1638.59" cy="322.50" r="2" fill="#fff" stroke="#52c41a" stroke-width="1.8"/><circle cx="1653.32" cy="321.60" r="2" fill="#fff" stroke="#52c41a" stroke-width="1.8"/><circle cx="1668.05" cy="321.90" r="2" fill="#fff" stroke="#52c41a" stroke-width="1.8"/><circle cx="1682.78" cy="321.90" r="2" fill="#fff" stroke="#52c41a" stroke-width="1.8"/><circle cx="1697.51" cy="321.90" r="2" fill="#fff" stroke="#52c41a" stroke-width="1.8"/><circle cx="1712.24" cy="322.20" r="2" fill="#fff" stroke="#52c41a" stroke-width="1.8"/><circle cx="1726.97" cy="322.20" r="2" fill="#fff" stroke="#52c41a" stroke-width="1.8"/><circle cx="1741.70" cy="322.20" r="2" fill="#fff" stroke="#52c41a" stroke-width="1.8"/><circle cx="1756.43" cy="321.90" r="2" fill="#fff" stroke="#52c41a" stroke-width="1.8"/><circle cx="1771.16" cy="320.50" r="2" fill="#fff" stroke="#52c41a" stroke-width="1.8"/><circle cx="1785.89" cy="319.00" r="2" fill="#fff" stroke="#52c41a" stroke-width="1.8"/><circle cx="1800.62" cy="323.10" r="2" fill="#fff" stroke="#52c41a" stroke-width="1.8"/><circle cx="1815.35" cy="321.00" r="2" fill="#fff" stroke="#52c41a" stroke-width="1.8"/><circle cx="1830.08" cy="322.20" r="2" fill="#fff" stroke="#52c41a" stroke-width="1.8"/>
<path d="M1138.95 425.00 A15.00 15.00 0 1 1 1166.05 425.00 C1162.20 433.13 1152.50 436.64 1152.50 447.14 C1152.50 436.64 1142.80 433.13 1138.95 425.00 Z" fill="#2f54eb"/>
<path d="M1197.87 425.00 A15.00 15.00 0 1 1 1224.97 425.00 C1221.12 433.13 1211.42 436.64 1211.42 447.14 C1211.42 436.64 1201.72 433.13 1197.87 425.00 Z" fill="#13c2c2"/>
<path d="M1168.41 380.26 A15.00 15.00 0 1 1 1195.51 380.26 C1191.66 388.39 1181.96 391.90 1181.96 402.40 C1181.96 391.90 1172.26 388.39 1168.41 380.26 Z" fill="#722ed1"/>
<path d="M1227.33 305.06 A15.00 15.00 0 1 1 1254.43 305.06 C1250.58 313.19 1240.88 316.70 1240.88 327.20 C1240.88 316.70 1231.18 313.19 1227.33 305.06 Z" fill="#52c41a"/>
<path d="M1772.34 296.86 A15.00 15.00 0 1 1 1799.44 296.86 C1795.59 304.99 1785.89 308.50 1785.89 319.00 C1785.89 308.50 1776.19 304.99 1772.34 296.86 Z" fill="#52c41a"/>
<path d="M1816.53 380.26 A15.00 15.00 0 1 1 1843.63 380.26 C1839.78 388.39 1830.08 391.90 1830.08 402.40 C1830.08 391.90 1820.38 388.39 1816.53 380.26 Z" fill="#722ed1"/>
<path d="M1772.34 425.00 A15.00 15.00 0 1 1 1799.44 425.00 C1795.59 433.13 1785.89 436.64 1785.89 447.14 C1785.89 436.64 1776.19 433.13 1772.34 425.00 Z" fill="#2f54eb"/>
<path d="M1816.53 425.00 A15.00 15.00 0 1 1 1843.63 425.00 C1839.78 433.13 1830.08 436.64 1830.08 447.14 C1830.08 436.64 1820.38 433.13 1816.53 425.00 Z" fill="#13c2c2"/>
<text x="1152.50" y="423.77" text-anchor="middle" font-size="12" font-weight="bold" fill="#fff" stroke="#2f54eb" stroke-width="1.2" paint-order="stroke" font-family="Liberation Sans, sans-serif">-0.04</text>
<text x="1211.42" y="423.77" text-anchor="middle" font-size="12" font-weight="normal" fill="#444" stroke="#eb2f96" stroke-width="0.9" paint-order="stroke" font-family="Liberation Sans, sans-serif">0.1</text>
<text x="1181.96" y="379.03" text-anchor="middle" font-size="12" font-weight="bold" fill="#fff" stroke="#722ed1" stroke-width="1.2" paint-order="stroke" font-family="Liberation Sans, sans-serif">89.9</text>
<text x="1240.88" y="303.83" text-anchor="middle" font-size="12" font-weight="normal" fill="#333" font-family="Liberation Sans, sans-serif">241.32</text>
<text x="1785.89" y="295.63" text-anchor="middle" font-size="12" font-weight="normal" fill="#333" font-family="Liberation Sans, sans-serif">258.01</text>
<text x="1830.08" y="379.03" text-anchor="middle" font-size="12" font-weight="bold" fill="#fff" stroke="#722ed1" stroke-width="1.2" paint-order="stroke" font-family="Liberation Sans, sans-serif">89.96</text>
<text x="1785.89" y="423.77" text-anchor="middle" font-size="12" font-weight="bold" fill="#fff" stroke="#2f54eb" stroke-width="1.2" paint-order="stroke" font-family="Liberation Sans, sans-serif">-0.01</text>
<text x="1830.08" y="423.77" text-anchor="middle" font-size="12" font-weight="normal" fill="#444" stroke="#eb2f96" stroke-width="0.9" paint-order="stroke" font-family="Liberation Sans, sans-serif">0.04</text>
</svg>
<svg style="left:0;top:0" width="1920" height="937">
<rect x="1156.20" y="521" width="676.10" height="8" fill="#dde3ee" rx="2"/>
<rect x="1156.20" y="529" width="676.10" height="29" fill="#e7eefd"/>
<polygon points="1156.20,558 1156.20,552.00 1170.90,552.00 1185.60,552.00 1200.29,552.00 1214.99,545.60 1229.69,545.60 1244.39,545.60 1259.08,539.20 1273.78,539.20 1288.48,539.20 1303.18,545.60 1317.88,545.60 1332.57,545.60 1347.27,545.60 1361.97,545.60 1376.67,545.60 1391.37,545.60 1406.06,539.20 1420.76,539.20 1435.46,539.20 1450.16,545.60 1464.85,539.20 1479.55,545.60 1494.25,545.60 1508.95,545.60 1523.65,545.60 1538.34,545.60 1553.04,545.60 1567.74,545.60 1582.44,545.60 1597.13,539.20 1611.83,539.20 1626.53,545.60 1641.23,545.60 1655.93,539.20 1670.62,545.60 1685.32,545.60 1700.02,545.60 1714.72,545.60 1729.42,545.60 1744.11,545.60 1758.81,545.60 1773.51,545.60 1788.21,533.20 1802.90,539.20 1817.60,539.20 1832.30,535.00 1832.30,558" fill="#d3e0fa"/>
<polyline points="1156.20,552.00 1170.90,552.00 1185.60,552.00 1200.29,552.00 1214.99,545.60 1229.69,545.60 1244.39,545.60 1259.08,539.20 1273.78,539.20 1288.48,539.20 1303.18,545.60 1317.88,545.60 1332.57,545.60 1347.27,545.60 1361.97,545.60 1376.67,545.60 1391.37,545.60 1406.06,539.20 1420.76,539.20 1435.46,539.20 1450.16,545.60 1464.85,539.20 1479.55,545.60 1494.25,545.60 1508.95,545.60 1523.65,545.60 1538.34,545.60 1553.04,545.60 1567.74,545.60 1582.44,545.60 1597.13,539.20 1611.83,539.20 1626.53,545.60 1641.23,545.60 1655.93,539.20 1670.62,545.60 1685.32,545.60 1700.02,545.60 1714.72,545.60 1729.42,545.60 1744.11,545.60 1758.81,545.60 1773.51,545.60 1788.21,533.20 1802.90,539.20 1817.60,539.20 1832.30,535.00" fill="none" stroke="#9cb7f5" stroke-width="1"/>
<path d="M1156.20 529 V558" stroke="#aab4c8" stroke-width="1.2"/>
<rect x="1153.20" y="533.5" width="6" height="18.5" rx="2" fill="#fff" stroke="#aab4c8" stroke-width="1"/>
<path d="M1832.30 529 V558" stroke="#aab4c8" stroke-width="1.2"/>
<rect x="1829.30" y="533.5" width="6" height="18.5" rx="2" fill="#fff" stroke="#aab4c8" stroke-width="1"/>
<path d="M1491.2 523 V527 M1494.2 523 V527 M1497.2 523 V527" stroke="#fff" stroke-width="1"/>
</svg>
<div class="r" style="left:220px;top:628px;width:1674px;height:2px;background:#e4e7ed"></div>
<div class="r" style="left:220px;top:628px;width:89px;height:2px;background:#409eff"></div>
<div class="t" style="left:220px;top:600.0px;font-size:14px;line-height:20px;color:#409eff;font-weight:normal;">QJ01数据列表</div>
<div class="t" style="left:350px;top:600.0px;font-size:14px;line-height:20px;color:#303133;font-weight:normal;">QJ02数据列表</div>
<div class="r" style="left:220px;top:644px;width:1674px;height:40px;background:#e9ecf1"></div>
<div class="t" style="left:234px;top:654.5px;font-size:14px;line-height:20px;color:#303133;font-weight:normal;">QJ01</div>
<div class="r" style="left:825px;top:651px;width:277px;height:28px;border:1px solid #dcdfe6;border-radius:4px;background:#fff"></div>
<div class="r" style="left:830px;top:655px;width:117px;height:20px;background:#f4f4f5;border:1px solid #e9e9eb;border-radius:4px"></div><div class="t" style="left:836px;top:655.0px;font-size:12px;line-height:20px;color:#909399;font-weight:normal;">X轴方向倾斜角度</div><svg style="left:932.0px;top:659.5px" width="11" height="11" viewBox="0 0 11 11"><circle cx="5.5" cy="5.5" r="5.5" fill="#c0c4cc"/><path d="M3.5 3.5 L7.5 7.5 M7.5 3.5 L3.5 7.5" stroke="#fff" stroke-width="1"/></svg>
<div class="r" style="left:953px;top:655px;width:29px;height:20px;background:#f4f4f5;border:1px solid #e9e9eb;border-radius:4px"></div><div class="t" style="left:959px;top:655.0px;font-size:12px;line-height:20px;color:#909399;font-weight:normal;">+ 4</div>
<svg style="left:1078px;top:662px" width="12" height="8" viewBox="0 0 12 8"><path d="M1 1.5 L6 6.5 L11 1.5" fill="none" stroke="#c0c4cc" stroke-width="1.1"/></svg>
<div class="r" style="left:1113px;top:651px;width:106px;height:28px;border:1px solid #dcdfe6;border-radius:4px;background:#fff"></div>
<div class="t" style="left:1128px;top:655.0px;font-size:12px;line-height:20px;color:#606266;font-weight:normal;">实时</div>
<svg style="left:1195px;top:662px" width="12" height="8" viewBox="0 0 12 8"><path d="M1 1.5 L6 6.5 L11 1.5" fill="none" stroke="#c0c4cc" stroke-width="1.1"/></svg>
<div class="r" style="left:1229px;top:651px;width:51px;height:28px;background:#fff;border:1px solid #dcdfe6;border-radius:3px"></div>
<div class="t" style="left:954.5px;width:600px;text-align:center;top:655.0px;font-size:12px;line-height:20px;color:#606266;font-weight:normal;">3天</div>
<div class="r" style="left:1290px;top:651px;width:51px;height:28px;background:#fff;border:1px solid #dcdfe6;border-radius:3px"></div>
<div class="t" style="left:1015.5px;width:600px;text-align:center;top:655.0px;font-size:12px;line-height:20px;color:#606266;font-weight:normal;">7天</div>
<div class="r" style="left:1351px;top:651px;width:57px;height:28px;background:#fff;border:1px solid #dcdfe6;border-radius:3px"></div>
<div class="t" style="left:1079.5px;width:600px;text-align:center;top:655.0px;font-size:12px;line-height:20px;color:#606266;font-weight:normal;">30天</div>
<div class="r" style="left:1828px;top:651px;width:56px;height:28px;background:#fff;border:1px solid #dcdfe6;border-radius:3px"></div>
<div class="t" style="left:1556.0px;width:600px;text-align:center;top:655.0px;font-size:12px;line-height:20px;color:#606266;font-weight:normal;">导出</div>
<div class="r" style="left:1418px;top:651px;width:400px;height:28px;border:1px solid #dcdfe6;border-radius:4px;background:#fff"></div>
<svg style="left:1430px;top:658.5px" width="13" height="13" viewBox="0 0 13 13"><circle cx="6.5" cy="6.5" r="5.6" fill="none" stroke="#c0c4cc" stroke-width="1.1"/><path d="M6.5 3 V6.8 H9.2" fill="none" stroke="#c0c4cc" stroke-width="1.1"/></svg>
<div class="t" style="left:1222px;width:600px;text-align:center;top:654.5px;font-size:12px;line-height:20px;color:#c0c4cc;font-weight:normal;">开始日期</div>
<div class="t" style="left:1311px;width:600px;text-align:center;top:654.5px;font-size:12px;line-height:20px;color:#303133;font-weight:normal;">至</div>
<div class="t" style="left:1398px;width:600px;text-align:center;top:654.5px;font-size:12px;line-height:20px;color:#c0c4cc;font-weight:normal;">结束日期</div>
<div class="r" style="left:220px;top:685px;width:1674px;height:44px;background:#f7f7f7;border-bottom:1px solid #dfe6ec"></div>
<div class="t" style="left:31px;width:600px;text-align:center;top:696.0px;font-size:13px;line-height:20px;color:#515a6e;font-weight:bold;">测点名称</div>
<div class="t" style="left:216.5px;width:600px;text-align:center;top:696.0px;font-size:13px;line-height:20px;color:#515a6e;font-weight:bold;">采集时间</div>
<div class="t" style="left:400.5px;width:600px;text-align:center;top:696.0px;font-size:13px;line-height:20px;color:#515a6e;font-weight:bold;">X轴方向倾斜角度(°)</div>
<div class="t" style="left:617.5px;width:600px;text-align:center;top:696.0px;font-size:13px;line-height:20px;color:#515a6e;font-weight:bold;">Y轴方向倾斜角度(°)</div>
<div class="t" style="left:834.5px;width:600px;text-align:center;top:696.0px;font-size:13px;line-height:20px;color:#515a6e;font-weight:bold;">Z轴的自转角度(°)</div>
<div class="t" style="left:1051.5px;width:600px;text-align:center;top:696.0px;font-size:13px;line-height:20px;color:#515a6e;font-weight:bold;">xy轴合成方位角倾斜角度(°)</div>
<div class="t" style="left:1268.5px;width:600px;text-align:center;top:696.0px;font-size:13px;line-height:20px;color:#515a6e;font-weight:bold;">合成方位角(°)</div>
<div class="t" style="left:1485.5px;width:600px;text-align:center;top:696.0px;font-size:13px;line-height:20px;color:#515a6e;font-weight:bold;">状态</div>
<div class="r" style="left:220px;top:729px;width:1674px;height:44px;border-bottom:1px solid #e3e8ee"></div>
<div class="t" style="left:31px;width:600px;text-align:center;top:740.0px;font-size:14px;line-height:20px;color:#606266;font-weight:normal;">QJ01</div>
<div class="t" style="left:216.5px;width:600px;text-align:center;top:740.0px;font-size:14px;line-height:20px;color:#606266;font-weight:normal;">2023-08-14 18:07:34</div>
<div class="t" style="left:400.5px;width:600px;text-align:center;top:740.0px;font-size:14px;line-height:20px;color:#606266;font-weight:normal;">-0.00</div>
<div class="t" style="left:617.5px;width:600px;text-align:center;top:740.0px;font-size:14px;line-height:20px;color:#606266;font-weight:normal;">-0.00</div>
<div class="t" style="left:834.5px;width:600px;text-align:center;top:740.0px;font-size:14px;line-height:20px;color:#606266;font-weight:normal;">90.00</div>
<div class="t" style="left:1051.5px;width:600px;text-align:center;top:740.0px;font-size:14px;line-height:20px;color:#606266;font-weight:normal;">0.00</div>
<div class="t" style="left:1268.5px;width:600px;text-align:center;top:740.0px;font-size:14px;line-height:20px;color:#606266;font-weight:normal;">0.00</div>
<div class="t" style="left:1485.5px;width:600px;text-align:center;top:740.0px;font-size:14px;line-height:20px;color:#606266;font-weight:normal;">正常</div>
<div class="r" style="left:220px;top:773px;width:1674px;height:44px;border-bottom:1px solid #e3e8ee"></div>
<div class="t" style="left:31px;width:600px;text-align:center;top:784.0px;font-size:14px;line-height:20px;color:#606266;font-weight:normal;">QJ01</div>
<div class="t" style="left:216.5px;width:600px;text-align:center;top:784.0px;font-size:14px;line-height:20px;color:#606266;font-weight:normal;">2023-08-14 16:07:52</div>
<div class="t" style="left:400.5px;width:600px;text-align:center;top:784.0px;font-size:14px;line-height:20px;color:#606266;font-weight:normal;">-0.02</div>
<div class="t" style="left:617.5px;width:600px;text-align:center;top:784.0px;font-size:14px;line-height:20px;color:#606266;font-weight:normal;">0.02</div>
<div class="t" style="left:834.5px;width:600px;text-align:center;top:784.0px;font-size:14px;line-height:20px;color:#606266;font-weight:normal;">89.97</div>
<div class="t" style="left:1051.5px;width:600px;text-align:center;top:784.0px;font-size:14px;line-height:20px;color:#606266;font-weight:normal;">0.02</div>
<div class="t" style="left:1268.5px;width:600px;text-align:center;top:784.0px;font-size:14px;line-height:20px;color:#606266;font-weight:normal;">229.82</div>
<div class="t" style="left:1485.5px;width:600px;text-align:center;top:784.0px;font-size:14px;line-height:20px;color:#606266;font-weight:normal;">正常</div>
<div class="r" style="left:220px;top:817px;width:1674px;height:44px;border-bottom:1px solid #e3e8ee"></div>
<div class="t" style="left:31px;width:600px;text-align:center;top:828.0px;font-size:14px;line-height:20px;color:#606266;font-weight:normal;">QJ01</div>
<div class="t" style="left:216.5px;width:600px;text-align:center;top:828.0px;font-size:14px;line-height:20px;color:#606266;font-weight:normal;">2023-08-14 14:08:06</div>
<div class="t" style="left:400.5px;width:600px;text-align:center;top:828.0px;font-size:14px;line-height:20px;color:#606266;font-weight:normal;">-0.01</div>
<div class="t" style="left:617.5px;width:600px;text-align:center;top:828.0px;font-size:14px;line-height:20px;color:#606266;font-weight:normal;">0.01</div>
<div class="t" style="left:834.5px;width:600px;text-align:center;top:828.0px;font-size:14px;line-height:20px;color:#606266;font-weight:normal;">89.98</div>
<div class="t" style="left:1051.5px;width:600px;text-align:center;top:828.0px;font-size:14px;line-height:20px;color:#606266;font-weight:normal;">0.01</div>
<div class="t" style="left:1268.5px;width:600px;text-align:center;top:828.0px;font-size:14px;line-height:20px;color:#606266;font-weight:normal;">222.45</div>
<div class="t" style="left:1485.5px;width:600px;text-align:center;top:828.0px;font-size:14px;line-height:20px;color:#606266;font-weight:normal;">正常</div>
<div class="r" style="left:220px;top:861px;width:1674px;height:44px;border-bottom:1px solid #e3e8ee"></div>
<div class="t" style="left:31px;width:600px;text-align:center;top:872.0px;font-size:14px;line-height:20px;color:#606266;font-weight:normal;">QJ01</div>
<div class="t" style="left:216.5px;width:600px;text-align:center;top:872.0px;font-size:14px;line-height:20px;color:#606266;font-weight:normal;">2023-08-14 12:08:17</div>
<div class="t" style="left:400.5px;width:600px;text-align:center;top:872.0px;font-size:14px;line-height:20px;color:#606266;font-weight:normal;">-0.04</div>
<div class="t" style="left:617.5px;width:600px;text-align:center;top:872.0px;font-size:14px;line-height:20px;color:#606266;font-weight:normal;">0.03</div>
<div class="t" style="left:834.5px;width:600px;text-align:center;top:872.0px;font-size:14px;line-height:20px;color:#606266;font-weight:normal;">89.95</div>
<div class="t" style="left:1051.5px;width:600px;text-align:center;top:872.0px;font-size:14px;line-height:20px;color:#606266;font-weight:normal;">0.04</div>
<div class="t" style="left:1268.5px;width:600px;text-align:center;top:872.0px;font-size:14px;line-height:20px;color:#606266;font-weight:normal;">217.12</div>
<div class="t" style="left:1485.5px;width:600px;text-align:center;top:872.0px;font-size:14px;line-height:20px;color:#606266;font-weight:normal;">正常</div>
<div class="r" style="left:220px;top:905px;width:1674px;height:44px;border-bottom:1px solid #e3e8ee"></div>
<div class="t" style="left:31px;width:600px;text-align:center;top:916.0px;font-size:14px;line-height:20px;color:#606266;font-weight:normal;">QJ01</div>
<div class="t" style="left:216.5px;width:600px;text-align:center;top:916.0px;font-size:14px;line-height:20px;color:#606266;font-weight:normal;">2023-08-14 10:08:35</div>
<div class="t" style="left:400.5px;width:600px;text-align:center;top:916.0px;font-size:14px;line-height:20px;color:#606266;font-weight:normal;">-0.03</div>
<div class="t" style="left:617.5px;width:600px;text-align:center;top:916.0px;font-size:14px;line-height:20px;color:#606266;font-weight:normal;">0.04</div>
<div class="t" style="left:834.5px;width:600px;text-align:center;top:916.0px;font-size:14px;line-height:20px;color:#606266;font-weight:normal;">89.95</div>
<div class="t" style="left:1051.5px;width:600px;text-align:center;top:916.0px;font-size:14px;line-height:20px;color:#606266;font-weight:normal;">0.04</div>
<div class="t" style="left:1268.5px;width:600px;text-align:center;top:916.0px;font-size:14px;line-height:20px;color:#606266;font-weight:normal;">229.42</div>
<div class="t" style="left:1485.5px;width:600px;text-align:center;top:916.0px;font-size:14px;line-height:20px;color:#606266;font-weight:normal;">正常</div>
<div class="r" style="left:1914px;top:0px;width:6px;height:937px;background:#f1f1f1"></div>
<div class="r" style="left:1914px;top:0px;width:6px;height:708px;background:#c1c1c1;border-radius:0 0 3px 3px"></div>
<div class="r" style="left:0px;top:916px;width:255px;height:21px;background:#a8a8a8;border-top-right-radius:4px"></div>
<div class="t" style="left:5px;top:917.0px;font-size:12px;line-height:20px;color:#1e1e1e;font-weight:normal;letter-spacing:0.22px">正在等待 webapi.amap.com 的响应...</div>
</body></html>
